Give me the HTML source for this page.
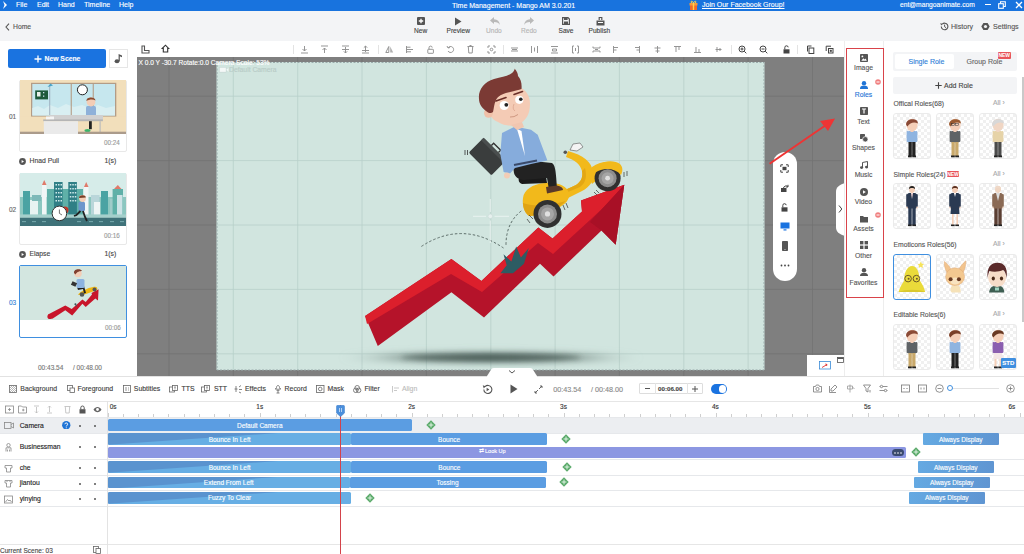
<!DOCTYPE html>
<html><head><meta charset="utf-8">
<style>
*{margin:0;padding:0;box-sizing:border-box}
html,body{width:1024px;height:554px;overflow:hidden;background:#fff;font-family:"Liberation Sans",sans-serif;color:#333}
.a{position:absolute}
.t{position:absolute;white-space:nowrap;line-height:1;-webkit-text-stroke:0.12px currentColor}
#title{left:0;top:0;width:1024px;height:10.5px;background:#1873de;color:#fff}
#tb{left:0;top:10.5px;width:1024px;height:30.5px;background:#f3f4f6}
#left{left:0;top:41px;width:137px;height:335px;background:#fff}
#ctb{left:137px;top:41px;width:708px;height:16px;background:#fff}
#canvas{left:137px;top:57px;width:707px;height:319px;background:#7f7f7f;overflow:hidden}
#strip{left:844px;top:41px;width:40px;height:335px;background:#fff}
#rp{left:884px;top:41px;width:140px;height:335px;background:#fff}
#ttb{left:0;top:376px;width:1024px;height:25px;background:#fff}
#tl{left:0;top:401px;width:1024px;height:153px;background:#fff}
</style></head><body>
<div id="title" class="a">
<svg class="a" style="left:2px;top:1px" width="6" height="8" viewBox="0 0 6 8"><path d="M1 0 L5 4 L1 8 L2.5 4 Z" fill="#fff"/></svg>
<span class="t" style="left:16px;top:0.8px;font-size:7px;color:#fff">File</span>
<span class="t" style="left:37px;top:0.8px;font-size:7px;color:#fff">Edit</span>
<span class="t" style="left:58px;top:0.8px;font-size:7px;color:#fff">Hand</span>
<span class="t" style="left:84px;top:0.8px;font-size:7px;color:#fff">Timeline</span>
<span class="t" style="left:119px;top:0.8px;font-size:7px;color:#fff">Help</span>
<span class="t" style="left:452px;top:1.5px;font-size:7px;color:#fff">Time Management - Mango AM 3.0.201</span>
<svg class="a" style="left:689px;top:0px" width="9" height="10" viewBox="0 0 9 10"><rect x="1" y="4" width="7" height="6" fill="#f06a2a"/><rect x="0.5" y="3" width="8" height="2.5" fill="#f59a3b"/><rect x="3.8" y="3" width="1.4" height="7" fill="#ffd34a"/><path d="M4.5 3 C3 0 1.5 1 2.5 3 M4.5 3 C6 0 7.5 1 6.5 3" stroke="#ffd34a" stroke-width="1" fill="none"/></svg>
<span class="t" style="left:702px;top:1.2px;font-size:7px;color:#fff;text-decoration:underline">Join Our Facebook Group!</span>
<span class="t" style="left:900px;top:1.5px;font-size:6.7px;color:#fff">ent@mangoanimate.com</span>
<div class="a" style="left:985px;top:4px;width:6px;height:1.3px;background:#fff"></div>
<svg class="a" style="left:998px;top:1px" width="8" height="8" viewBox="0 0 8 8"><rect x="0.7" y="2.7" width="4.6" height="4.6" fill="none" stroke="#fff" stroke-width="1.1"/><path d="M2.5 2.5 V0.7 H7.3 V5.5 H5.5" fill="none" stroke="#fff" stroke-width="1.1"/></svg>
<svg class="a" style="left:1015px;top:1px" width="8" height="8" viewBox="0 0 8 8"><path d="M1 1 L7 7 M7 1 L1 7" stroke="#fff" stroke-width="1.3"/></svg>
</div>
<div id="tb" class="a">
<svg class="a" style="left:5px;top:12px" width="5" height="8" viewBox="0 0 5 8"><path d="M4 0.7 L1 4 L4 7.3" stroke="#555" stroke-width="1.1" fill="none"/></svg>
<span class="t" style="left:13px;top:13px;font-size:6.8px;color:#555">Home</span>
<!-- New -->
<svg class="a" style="left:417px;top:6.5px" width="8" height="8" viewBox="0 0 8 8"><rect x="0" y="0" width="8" height="8" rx="1" fill="#555"/><path d="M4 1.8 V6.2 M1.8 4 H6.2" stroke="#fff" stroke-width="1.3"/></svg>
<span class="t" style="left:414px;top:17px;font-size:6.6px;color:#444">New</span>
<svg class="a" style="left:454px;top:6.5px" width="8" height="9" viewBox="0 0 8 9"><path d="M1 0.5 L7.5 4.5 L1 8.5 Z" fill="#555"/></svg>
<span class="t" style="left:446.5px;top:17.5px;font-size:6.6px;color:#444">Preview</span>
<svg class="a" style="left:490px;top:6.5px" width="10" height="8" viewBox="0 0 10 8"><path d="M4 0 L0 3.5 L4 7 V5 C7 5 9 6 10 8 C9.5 4.5 7.5 2.3 4 2.2 Z" fill="#b9b9b9"/></svg>
<span class="t" style="left:486px;top:17px;font-size:6.6px;color:#b5b5b5">Undo</span>
<svg class="a" style="left:524px;top:6.5px" width="10" height="8" viewBox="0 0 10 8"><path d="M6 0 L10 3.5 L6 7 V5 C3 5 1 6 0 8 C0.5 4.5 2.5 2.3 6 2.2 Z" fill="#b9b9b9"/></svg>
<span class="t" style="left:521px;top:17px;font-size:6.6px;color:#b5b5b5">Redo</span>
<svg class="a" style="left:562px;top:6.5px" width="8" height="8" viewBox="0 0 8 8"><path d="M0.6 0.6 H6 L7.4 2 V7.4 H0.6 Z" fill="none" stroke="#555" stroke-width="1.2"/><rect x="2" y="0.6" width="3.6" height="2.4" fill="#555"/><rect x="2" y="4.5" width="4" height="2.9" fill="#555"/></svg>
<span class="t" style="left:558.5px;top:17.5px;font-size:6.6px;color:#444">Save</span>
<svg class="a" style="left:596px;top:6px" width="9" height="9" viewBox="0 0 9 9"><path d="M3.2 3 V0.5 H5.8 V3" stroke="#555" stroke-width="1.2" fill="none"/><path d="M0.5 3.5 H8.5 V8.5 H0.5 Z" fill="#555"/><rect x="2" y="5" width="5" height="1" fill="#fff"/></svg>
<span class="t" style="left:588.5px;top:17px;font-size:6.6px;color:#444">Publish</span>
<!-- history/settings -->
<svg class="a" style="left:940px;top:11.5px" width="9" height="9" viewBox="0 0 9 9"><path d="M1.3 4.5 A3.3 3.3 0 1 0 2.3 2.1" fill="none" stroke="#555" stroke-width="1.1"/><path d="M0.3 1 L2.6 1.9 L1.1 3.6 Z" fill="#555"/><path d="M4.6 2.6 V4.7 L6 5.7" stroke="#555" stroke-width="1" fill="none"/></svg>
<span class="t" style="left:951px;top:13.5px;font-size:7.1px;color:#555">History</span>
<svg class="a" style="left:981px;top:11.5px" width="9" height="9" viewBox="0 0 9 9"><path d="M0.3 4.5 L2.4 0.9 H6.6 L8.7 4.5 L6.6 8.1 H2.4 Z" fill="#555"/><circle cx="4.5" cy="4.5" r="1.6" fill="#f3f4f6"/></svg>
<span class="t" style="left:993px;top:13.5px;font-size:7.1px;color:#555">Settings</span>
</div>
<div id="left" class="a">
<div class="a" style="left:8px;top:8px;width:98px;height:19px;background:#1a73e0;border-radius:2px"></div>
<svg class="a" style="left:34px;top:13.5px" width="8" height="8" viewBox="0 0 8 8"><path d="M4 0.5 V7.5 M0.5 4 H7.5" stroke="#fff" stroke-width="1.3"/></svg>
<span class="t" style="left:44.5px;top:14.5px;font-size:6.8px;color:#fff;font-weight:bold">New Scene</span>
<div class="a" style="left:109px;top:8px;width:19px;height:19px;border:1px solid #e6e6e6;background:#fff"></div>
<svg class="a" style="left:114px;top:12px" width="9" height="11" viewBox="0 0 9 11"><ellipse cx="3" cy="8.3" rx="2.4" ry="2" fill="#555"/><path d="M4.6 8 V1 L8 2.6 V4.2 L5.8 3.2 V8" fill="#555"/></svg>
<!-- card 01 -->
<span class="t" style="left:9px;top:73px;font-size:6.5px;color:#666">01</span>
<div class="a" style="left:19px;top:39px;width:108px;height:72px;border:1px solid #e8e8e8;border-radius:2px;background:#fff"></div>
<svg class="a" style="left:20px;top:39px" width="106" height="54" viewBox="0 0 106 54">
<rect width="106" height="54" fill="#f2dfbb"/>
<rect x="11" y="2.8" width="85.3" height="34" fill="#b39c86"/>
<rect x="12.3" y="4" width="82.7" height="31.5" fill="#c6e7ee"/>
<path d="M12.3 35.5 V28 L18 26 L24 29 L30 25 L38 28 L46 24 L54 27 L62 25 L70 28 L78 25 L86 28 L95 26 V35.5 Z" fill="#d9eff2"/>
<rect x="50.7" y="4" width="1.1" height="31.5" fill="#b39c86"/><rect x="72.7" y="4" width="1.1" height="31.5" fill="#b39c86"/>
<rect x="29.3" y="5" width="0.9" height="30" fill="#9ab"/><path d="M27.5 7 L30.5 3.5 L33 5.5 Z" fill="#4aa3c8"/>
<rect x="15.2" y="10.4" width="12.8" height="9" fill="#1e5a3a"/><rect x="17" y="12" width="3.5" height="4.5" fill="#e8f0e8"/><rect x="23" y="12" width="1.3" height="1.3" fill="#cde"/><rect x="23" y="15.5" width="1.3" height="1.3" fill="#cde"/>
<circle cx="62.4" cy="9.8" r="5" fill="#fff" stroke="#222" stroke-width="1"/>
<rect x="0" y="36.7" width="106" height="17.3" fill="#f2dfbb"/>
<rect x="66" y="26" width="10" height="10" rx="1.5" fill="#8eb1d9"/>
<circle cx="71" cy="22" r="4.4" fill="#f3cdb6"/><path d="M66.5 21 C66 16.5 75.5 16.5 75.5 20.5 C73 19 69 19.5 66.5 21 Z" fill="#8a4a2e"/>
<rect x="30" y="35" width="53" height="5" fill="#d0d0d0"/>
<rect x="23.2" y="39.4" width="59.7" height="1.8" fill="#b5b5b5"/>
<rect x="23.8" y="41.2" width="34.2" height="12.8" fill="#eaeaea"/>
<rect x="79.5" y="41.2" width="1.2" height="12" fill="#bbb"/>
<rect x="69" y="41.2" width="2.8" height="8" fill="#222"/><ellipse cx="67.5" cy="50.5" rx="3" ry="1.5" fill="#3ab56a"/>
<rect x="26" y="36.5" width="8" height="2.8" fill="#f4f4f4"/>
<rect x="0" y="51.7" width="24" height="2.3" fill="#ab9b8b"/><rect x="58" y="51.7" width="48" height="2.3" fill="#ab9b8b"/>
</svg>
<span class="t" style="left:104px;top:99px;font-size:6.3px;color:#999">00:24</span>
<svg class="a" style="left:19px;top:116.8px" width="7" height="7" viewBox="0 0 7 7"><circle cx="3.5" cy="3.5" r="3.4" fill="#555"/><path d="M2.6 1.9 L5 3.5 L2.6 5.1 Z" fill="#fff"/></svg>
<span class="t" style="left:29.5px;top:117.3px;font-size:6.8px;color:#444">Hnad Pull</span>
<span class="t" style="left:104.5px;top:117.3px;font-size:6.8px;color:#444">1(s)</span>
<!-- card 02 -->
<span class="t" style="left:9px;top:166px;font-size:6.5px;color:#666">02</span>
<div class="a" style="left:19px;top:132px;width:108px;height:72px;border:1px solid #e8e8e8;border-radius:2px;background:#fff"></div>
<svg class="a" style="left:20px;top:132px" width="106" height="54" viewBox="0 0 106 54">
<rect width="106" height="54" fill="#d6ece9"/>
<rect x="0" y="24" width="106" height="18" fill="#8cc7c0"/>
<rect x="27" y="16" width="36" height="26" fill="#5fb0a8"/>
<rect x="3" y="18" width="7" height="24" fill="#4aa3a3"/><rect x="10" y="27" width="8" height="15" fill="#e8f3f2"/><rect x="12" y="22" width="9" height="6" fill="#7db9b8"/>
<rect x="22" y="12" width="4.5" height="30" fill="#f0f6f6"/><path d="M22 12 L24.2 7 L26.5 12 Z" fill="#e07a6a"/>
<rect x="34" y="9" width="8.6" height="33" fill="#2f7f86"/><rect x="48.3" y="9" width="8.6" height="33" fill="#2f7f86"/>
<g fill="#cfe9ea"><rect x="35.5" y="11" width="1.5" height="1.5"/><rect x="38" y="11" width="1.5" height="1.5"/><rect x="40.5" y="11" width="1.5" height="1.5"/><rect x="35.5" y="15" width="1.5" height="1.5"/><rect x="38" y="15" width="1.5" height="1.5"/><rect x="40.5" y="15" width="1.5" height="1.5"/><rect x="35.5" y="19" width="1.5" height="1.5"/><rect x="38" y="19" width="1.5" height="1.5"/><rect x="40.5" y="19" width="1.5" height="1.5"/><rect x="35.5" y="23" width="1.5" height="1.5"/><rect x="38" y="23" width="1.5" height="1.5"/><rect x="40.5" y="23" width="1.5" height="1.5"/><rect x="35.5" y="27" width="1.5" height="1.5"/><rect x="38" y="27" width="1.5" height="1.5"/><rect x="40.5" y="27" width="1.5" height="1.5"/>
<rect x="49.8" y="11" width="1.5" height="1.5"/><rect x="52.3" y="11" width="1.5" height="1.5"/><rect x="54.8" y="11" width="1.5" height="1.5"/><rect x="49.8" y="15" width="1.5" height="1.5"/><rect x="52.3" y="15" width="1.5" height="1.5"/><rect x="54.8" y="15" width="1.5" height="1.5"/><rect x="49.8" y="19" width="1.5" height="1.5"/><rect x="52.3" y="19" width="1.5" height="1.5"/><rect x="54.8" y="19" width="1.5" height="1.5"/><rect x="49.8" y="23" width="1.5" height="1.5"/><rect x="52.3" y="23" width="1.5" height="1.5"/><rect x="54.8" y="23" width="1.5" height="1.5"/><rect x="49.8" y="27" width="1.5" height="1.5"/><rect x="52.3" y="27" width="1.5" height="1.5"/><rect x="54.8" y="27" width="1.5" height="1.5"/></g>
<rect x="64" y="14" width="4.5" height="28" fill="#f0f6f6"/><path d="M64 14 L66.2 9 L68.5 14 Z" fill="#e07a6a"/>
<rect x="71" y="22" width="8.6" height="20" fill="#b9d6da"/><rect x="74" y="29" width="6" height="13" fill="#eef5f5"/>
<rect x="81" y="18" width="7" height="24" fill="#4aa3a3"/>
<rect x="90" y="26" width="6" height="16" fill="#9fcbc9"/><rect x="92.6" y="16" width="10.4" height="26" fill="#5fb0a8"/><path d="M94 16 L97.8 12 L101.5 16 Z" fill="#e07a6a"/><rect x="97" y="22" width="5.5" height="20" fill="#cde3e6"/>
<rect x="0" y="41.4" width="106" height="3.3" fill="#a5d0cc"/>
<rect x="0" y="44.7" width="106" height="8.3" fill="#3f7279"/>
<g fill="#9cc" opacity="0.8"><rect x="2" y="48.3" width="4" height="0.8"/><rect x="12" y="48.3" width="4" height="0.8"/><rect x="22" y="48.3" width="4" height="0.8"/><rect x="57" y="48.3" width="4" height="0.8"/><rect x="69" y="48.3" width="4" height="0.8"/><rect x="79" y="48.3" width="4" height="0.8"/><rect x="90" y="48.3" width="4" height="0.8"/><rect x="100" y="48.3" width="4" height="0.8"/></g>
<rect x="0" y="53" width="106" height="1" fill="#fff"/>
<circle cx="45" cy="37" r="3.5" fill="#c0392b"/>
<circle cx="39.4" cy="40.4" r="7.3" fill="#fff" stroke="#333" stroke-width="1"/><path d="M39.4 36.5 V40.4 L42 42" stroke="#333" stroke-width="0.7" fill="none"/>
<rect x="58.5" y="29" width="6.5" height="9" rx="1.2" fill="#6d96cb"/>
<circle cx="62.5" cy="25.5" r="3.4" fill="#f3cdb6"/><path d="M59 25 C58.6 21.5 66 21.5 65.8 24.5 Z" fill="#7a3f28"/>
<path d="M60.5 38 L56.5 42 L54 43 M63 38 L65 44 L67 48" stroke="#222" stroke-width="1.8" fill="none"/>
</svg>
<span class="t" style="left:104px;top:192px;font-size:6.3px;color:#999">00:16</span>
<svg class="a" style="left:19px;top:209.8px" width="7" height="7" viewBox="0 0 7 7"><circle cx="3.5" cy="3.5" r="3.4" fill="#555"/><path d="M2.6 1.9 L5 3.5 L2.6 5.1 Z" fill="#fff"/></svg>
<span class="t" style="left:29.5px;top:210.3px;font-size:6.8px;color:#444">Elapse</span>
<span class="t" style="left:104.5px;top:210.3px;font-size:6.8px;color:#444">1(s)</span>
<!-- card 03 -->
<span class="t" style="left:9px;top:259px;font-size:6.5px;color:#2f7fd6">03</span>
<div class="a" style="left:19px;top:224px;width:108px;height:73px;border:1px solid #3f8fe0;border-radius:2px;background:#fff"></div>
<svg class="a" style="left:20px;top:225px" width="106" height="54" viewBox="0 0 106 54">
<rect width="106" height="54" fill="#d3e6e0"/>
<path d="M28 48.5 L45.3 39.4 L51.7 43.1 L62.4 33.4 L65.7 36.1 L72 28.5 L71.5 27 L78.6 23.2 L78 34.5 L75.3 32.4 L65.7 41 L62.4 37.7 L52.2 49.6 L45.3 44.2 L32.4 52.8 Z" fill="#c8152a"/>
<circle cx="30" cy="50.5" r="2.6" fill="#c8152a"/>
<path d="M54 38 L57 41 L56 37 Z" fill="#3c5c60"/>
<path d="M58 29 C60 25 68 22 73 21 C77 20 78 22 77 24 L66 28 Z" fill="#f0b817"/>
<circle cx="62" cy="28.5" r="2.3" fill="#555"/><circle cx="74.5" cy="23.5" r="2" fill="#555"/>
<path d="M57 21 L64 20 L66 27 L64 27.5 L63 23 L58 24 Z" fill="#222"/>
<rect x="56.5" y="13" width="8" height="9" rx="1.5" fill="#8db3e0"/>
<rect x="51.5" y="16" width="5" height="4" fill="#333" transform="rotate(25 54 18)"/>
<circle cx="58" cy="7.5" r="3.8" fill="#f3cdb6"/><path d="M54 7 C53.5 2.5 61 2.5 62 5 C60 5 57 5.5 55.5 8.5 Z" fill="#80402f"/>
</svg>
<span class="t" style="left:105px;top:284px;font-size:6.3px;color:#999">00:06</span>
<span class="t" style="left:38px;top:324px;font-size:6.5px;color:#777">00:43.54</span>
<span class="t" style="left:73px;top:324px;font-size:6.5px;color:#777">/ 00:48.00</span>
</div>
<div id="ctb" class="a">
<svg class="a" style="left:4px;top:3.5px" width="9" height="9" viewBox="0 0 9 9"><path d="M1 1 H3.5 V5.5 H8 V8 H1 Z" fill="none" stroke="#555" stroke-width="1.1"/></svg>
<svg class="a" style="left:24px;top:3px" width="9" height="9" viewBox="0 0 9 9"><path d="M1.2 4.5 L4.5 1.2 L7.8 4.5 H6.7 V8 H2.3 V4.5 Z" fill="none" stroke="#333" stroke-width="1.1"/></svg>
<div class="a" style="left:156.3px;top:4px;width:1px;height:9px;background:#e3e3e3"></div>
<div class="a" style="left:241.0px;top:4px;width:1px;height:9px;background:#e3e3e3"></div>
<div class="a" style="left:366.0px;top:4px;width:1px;height:9px;background:#e3e3e3"></div>
<div class="a" style="left:594.0px;top:4px;width:1px;height:9px;background:#e3e3e3"></div>
<div class="a" style="left:659.5px;top:4px;width:1px;height:9px;background:#e3e3e3"></div>
<svg class="a" style="left:162.5px;top:3.5px" width="9" height="9" viewBox="0 0 9 9"><path d="M4.5 1 V6 M2.5 4 L4.5 6 L6.5 4 M1 8 H8" stroke="#909090" stroke-width="0.95" fill="none"/></svg>
<svg class="a" style="left:183.2px;top:3.5px" width="9" height="9" viewBox="0 0 9 9"><path d="M1 1 H8 M4.5 8 V3 M2.5 5 L4.5 3 L6.5 5" stroke="#909090" stroke-width="0.95" fill="none"/></svg>
<svg class="a" style="left:204.0px;top:3.5px" width="9" height="9" viewBox="0 0 9 9"><path d="M1 1 H8 M1 4.5 H8 M4.5 2 V8 M2.8 6.3 L4.5 8 L6.2 6.3" stroke="#909090" stroke-width="0.95" fill="none"/></svg>
<svg class="a" style="left:224.0px;top:3.5px" width="9" height="9" viewBox="0 0 9 9"><path d="M1 8 H8 M1 5.5 H8 M4.5 1 V7 M2.8 2.7 L4.5 1 L6.2 2.7" stroke="#909090" stroke-width="0.95" fill="none"/></svg>
<svg class="a" style="left:247.5px;top:3.5px" width="9" height="9" viewBox="0 0 9 9"><path d="M3.8 1.5 L0.8 7.5 H3.8 Z" stroke="#909090" stroke-width="0.95" fill="none"/><path d="M5.2 1.5 L8.2 7.5 H5.2 Z" fill="#b0b0b0"/></svg>
<svg class="a" style="left:268.0px;top:3.5px" width="9" height="9" viewBox="0 0 9 9"><path d="M1.5 1 V8 M1.5 2.2 H5.5 M1.5 4.5 H8 M1.5 6.8 H6" stroke="#909090" stroke-width="0.95" fill="none"/></svg>
<svg class="a" style="left:288.5px;top:3.5px" width="9" height="9" viewBox="0 0 9 9"><rect x="1.8" y="4.3" width="5.6" height="4" rx="0.5" stroke="#909090" stroke-width="0.95" fill="none"/><path d="M3 4.3 V2.8 A1.6 1.6 0 0 1 6.2 2.6" stroke="#909090" stroke-width="0.95" fill="none"/></svg>
<svg class="a" style="left:309.0px;top:3.5px" width="9" height="9" viewBox="0 0 9 9"><path d="M2 3 A3 3 0 1 1 2 6 M1 1 L2 3 L4 2.5" stroke="#909090" stroke-width="0.95" fill="none"/></svg>
<svg class="a" style="left:329.0px;top:3.5px" width="9" height="9" viewBox="0 0 9 9"><path d="M1.5 1.5 H7.5 M2.3 1.5 L2.8 8 H6.2 L6.7 1.5 M3.5 0.5 H5.5" stroke="#909090" stroke-width="0.95" fill="none"/></svg>
<svg class="a" style="left:349.5px;top:3.5px" width="9" height="9" viewBox="0 0 9 9"><path d="M1 3 V1 H3 M6 1 H8 V3 M8 6 V8 H6 M3 8 H1 V6" stroke="#909090" stroke-width="0.95" fill="none"/><circle cx="4.5" cy="4.5" r="1.3" stroke="#909090" stroke-width="0.95" fill="none"/></svg>
<svg class="a" style="left:372.5px;top:3.5px" width="9" height="9" viewBox="0 0 9 9"><path d="M1 3 H8 M2 4.5 H7 M1 6 H8" stroke="#909090" stroke-width="0.95" fill="none"/></svg>
<svg class="a" style="left:392.5px;top:3.5px" width="9" height="9" viewBox="0 0 9 9"><path d="M1.5 1 V8 M7.5 1 V8 M4.5 2.5 V6.5" stroke="#909090" stroke-width="0.95" fill="none"/></svg>
<svg class="a" style="left:412.9px;top:3.5px" width="9" height="9" viewBox="0 0 9 9"><path d="M1 1.5 H8 M2.5 4 H6.5 V6 H2.5 Z M1 8 H8" stroke="#909090" stroke-width="0.95" fill="none"/></svg>
<svg class="a" style="left:434.0px;top:3.5px" width="9" height="9" viewBox="0 0 9 9"><path d="M3 1 H1.5 V8 H3 M6 1 H7.5 V8 H6 M4.5 3 V6" stroke="#909090" stroke-width="0.95" fill="none"/></svg>
<svg class="a" style="left:454.5px;top:3.5px" width="9" height="9" viewBox="0 0 9 9"><path d="M1 1.5 V3 H8 V1.5 M1 7.5 V6 H8 V7.5 M3 4.5 H6" stroke="#909090" stroke-width="0.95" fill="none"/></svg>
<svg class="a" style="left:475.0px;top:3.5px" width="9" height="9" viewBox="0 0 9 9"><path d="M1.5 1 V8 M1.5 2.5 H6 M1.5 5 H4.5" stroke="#909090" stroke-width="0.95" fill="none"/></svg>
<svg class="a" style="left:495.0px;top:3.5px" width="9" height="9" viewBox="0 0 9 9"><path d="M7.5 1 V8 M3 2.5 H7.5 M4.5 5 H7.5" stroke="#909090" stroke-width="0.95" fill="none"/></svg>
<svg class="a" style="left:515.5px;top:3.5px" width="9" height="9" viewBox="0 0 9 9"><path d="M4.5 1 V8 M1.5 3 H7.5 M2.5 6 H6.5" stroke="#909090" stroke-width="0.95" fill="none"/></svg>
<svg class="a" style="left:536.0px;top:3.5px" width="9" height="9" viewBox="0 0 9 9"><path d="M1 1.5 H8 M3 1.5 V7 M6 1.5 V5" stroke="#909090" stroke-width="0.95" fill="none"/></svg>
<svg class="a" style="left:556.2px;top:3.5px" width="9" height="9" viewBox="0 0 9 9"><path d="M1 7.5 H8 M3 2 V7.5 M6 4 V7.5" stroke="#909090" stroke-width="0.95" fill="none"/></svg>
<svg class="a" style="left:577.0px;top:3.5px" width="9" height="9" viewBox="0 0 9 9"><path d="M1.5 4.5 H7.5 M3 2 V7 M6 3 V6" stroke="#909090" stroke-width="0.95" fill="none"/></svg>
<svg class="a" style="left:600.5px;top:3.5px" width="9" height="9" viewBox="0 0 9 9"><circle cx="4" cy="4" r="3" stroke="#444" stroke-width="1" fill="none"/><path d="M6.2 6.2 L8.3 8.3 M2.5 4 H5.5 M4 2.5 V5.5" stroke="#444" stroke-width="1" fill="none"/></svg>
<svg class="a" style="left:621.5px;top:3.5px" width="9" height="9" viewBox="0 0 9 9"><circle cx="4" cy="4" r="3" stroke="#444" stroke-width="1" fill="none"/><path d="M6.2 6.2 L8.3 8.3 M2.5 4 H5.5" stroke="#444" stroke-width="1" fill="none"/></svg>
<svg class="a" style="left:644.5px;top:3.5px" width="9" height="9" viewBox="0 0 9 9"><rect x="1.5" y="4.3" width="6" height="4.2" fill="#444"/><path d="M2.8 4.3 V2.7 A1.7 1.7 0 0 1 6.2 2.3" stroke="#444" stroke-width="1" fill="none"/></svg>
<svg class="a" style="left:668.5px;top:3.5px" width="9" height="9" viewBox="0 0 9 9"><rect x="3" y="3" width="4.8" height="5.5" stroke="#444" stroke-width="1" fill="none"/><path d="M1.5 6.5 V1 H5.5" stroke="#444" stroke-width="1" fill="none"/></svg>
<svg class="a" style="left:687.5px;top:3.5px" width="9" height="9" viewBox="0 0 9 9"><rect x="3.5" y="3.5" width="4.5" height="4.5" stroke="#444" stroke-width="1" fill="none"/><path d="M1.2 6 V1.2 H6" stroke="#444" stroke-width="1" fill="none"/><rect x="4.8" y="4.8" width="2" height="2" fill="#444"/></svg>
</div>
<div id="canvas" class="a">
<svg class="a" style="left:0;top:0" width="708" height="319" viewBox="137 57 708 319">
<defs>
<filter id="blur3" x="-50%" y="-200%" width="200%" height="500%"><feGaussianBlur stdDeviation="2.5"/></filter><filter id="blur6" x="-50%" y="-200%" width="200%" height="500%"><feGaussianBlur stdDeviation="3.5"/></filter>
<radialGradient id="shg" cx="0.5" cy="0.5" r="0.5"><stop offset="0" stop-color="#3d4f4a" stop-opacity="1"/><stop offset="0.6" stop-color="#5d716c" stop-opacity="0.7"/><stop offset="1" stop-color="#9fb5af" stop-opacity="0"/></radialGradient>
<clipPath id="stclip"><rect x="216.5" y="62" width="548" height="308"/></clipPath>
</defs>
<g stroke="#727272" stroke-width="0.8"><line x1="169.0" y1="57" x2="169.0" y2="376"/><line x1="233.3" y1="57" x2="233.3" y2="376"/><line x1="297.7" y1="57" x2="297.7" y2="376"/><line x1="362.0" y1="57" x2="362.0" y2="376"/><line x1="426.4" y1="57" x2="426.4" y2="376"/><line x1="490.8" y1="57" x2="490.8" y2="376"/><line x1="555.1" y1="57" x2="555.1" y2="376"/><line x1="619.4" y1="57" x2="619.4" y2="376"/><line x1="683.8" y1="57" x2="683.8" y2="376"/><line x1="748.1" y1="57" x2="748.1" y2="376"/><line x1="812.5" y1="57" x2="812.5" y2="376"/><line x1="137" y1="96.2" x2="845" y2="96.2"/><line x1="137" y1="160.6" x2="845" y2="160.6"/><line x1="137" y1="225.0" x2="845" y2="225.0"/><line x1="137" y1="289.4" x2="845" y2="289.4"/><line x1="137" y1="353.8" x2="845" y2="353.8"/></g>
<rect x="216.5" y="62" width="548" height="308" fill="#d1e5df"/>
<g stroke="#b7cfc9" stroke-width="0.8" clip-path="url(#stclip)"><line x1="169.0" y1="57" x2="169.0" y2="376"/><line x1="233.3" y1="57" x2="233.3" y2="376"/><line x1="297.7" y1="57" x2="297.7" y2="376"/><line x1="362.0" y1="57" x2="362.0" y2="376"/><line x1="426.4" y1="57" x2="426.4" y2="376"/><line x1="490.8" y1="57" x2="490.8" y2="376"/><line x1="555.1" y1="57" x2="555.1" y2="376"/><line x1="619.4" y1="57" x2="619.4" y2="376"/><line x1="683.8" y1="57" x2="683.8" y2="376"/><line x1="748.1" y1="57" x2="748.1" y2="376"/><line x1="812.5" y1="57" x2="812.5" y2="376"/><line x1="137" y1="96.2" x2="845" y2="96.2"/><line x1="137" y1="160.6" x2="845" y2="160.6"/><line x1="137" y1="225.0" x2="845" y2="225.0"/><line x1="137" y1="289.4" x2="845" y2="289.4"/><line x1="137" y1="353.8" x2="845" y2="353.8"/></g>
<rect x="217" y="62.5" width="547" height="307.5" fill="none" stroke="#9aa" stroke-width="1" stroke-dasharray="2 1.5"/>
<g clip-path="url(#stclip)">
<g clip-path="url(#stclip)">
<!-- dashed arcs & crosshair -->
<path d="M421.4 246.4 Q462 220 503.5 248" fill="none" stroke="#4f5f5b" stroke-width="0.9" stroke-dasharray="2.5 2"/>
<path d="M506 244.8 Q506 222 522.5 210" fill="none" stroke="#4f5f5b" stroke-width="0.9" stroke-dasharray="2.5 2"/>
<g stroke="#eef6f4" stroke-width="0.9" opacity="0.9"><line x1="473" y1="216.3" x2="486" y2="216.3"/><line x1="494.5" y1="216.3" x2="509" y2="216.3"/><line x1="490.3" y1="199" x2="490.3" y2="212"/><line x1="490.3" y1="220.5" x2="490.3" y2="243"/></g>
<circle cx="490.3" cy="216.3" r="2.3" fill="#e6f0ee" stroke="#c9dad6" stroke-width="0.6"/>
<!-- arrow -->
<path d="M365.1 315.9 L451.4 259 L481.4 281.1 L538.3 227.4 L552.5 238.5 L582 211.6 L581 200.5 L624.3 184.7 L615.7 244.8 L601.5 230.6 L553.5 276.4 L540 263.8 L484 317.5 L451.4 292.2 L377.8 345.9 Z" fill="#b5132a"/>
<path d="M365.1 315.9 L451.4 259 L481.4 281.1 L538.3 227.4 L552.5 238.5 L582 211.6 L581 200.5 L624.3 184.7 L604 207 L590 220 L553 254 L538 243 L482 292 L451 274 L367 324 Z" fill="#dc1f2c"/>
<path d="M624.3 184.7 L615.7 244.8 L601.5 230.6 L590 222 Z" fill="#a81026"/>
<!-- splash -->
<path d="M503.5 254.3 L511.4 261.5 L516.2 246.4 L520.9 257.4 L528.8 248 L524 263.8 L513 273.2 L500.4 273.2 L506.7 265.3 Z" fill="#2d5c63"/>
<!-- briefcase -->
<g transform="rotate(45 487.5 156.5)"><rect x="471.5" y="146" width="32" height="21" rx="1.5" fill="#3a3d3d"/><rect x="471.5" y="146" width="32" height="3.5" fill="#4a4e4e"/><path d="M482.5 146 V142.8 H492.5 V146" fill="none" stroke="#333" stroke-width="1.4"/></g>
<path d="M465 150 V155 M467.5 150 V155" stroke="#333" stroke-width="0.8"/>
<!-- scooter -->
<path d="M568 151 C583 155 592 162 593 172 C594 181 590 187 582 191 L562 201 C558 198 559 193 565 190 L576 185 C582 181 583 176 582 171 C580 164 575 160 566 157 Z" fill="#f2b91b"/><path d="M582 171 C583 176 582 181 576 185 L565 190 L568 192 L580 187 C586 183 587 176 585 168 Z" fill="#e3a714"/>
<path d="M592 167 C600 161 614 160 619 165 C621 168 621 171 620 173 L605 176 C600 177 596 181 592 184 C589 178 589 172 592 167 Z" fill="#f2b91b"/>
<path d="M523 198 C524 190 532 184 545 183 C558 182 567 186 569 193 C570 200 565 205 556 209 C546 213 536 216 529 216 C524 212 522 205 523 198 Z" fill="#f2b91b"/>
<path d="M556 209 C546 213 536 216 529 216 C525 213 523 208 523 203 C533 207 548 206 566 201 Z" fill="#e0a414"/>
<path d="M570 150 L573 144 L580 143 L583 147 L577 151 Z" fill="#f4f4f4" stroke="#555" stroke-width="0.6"/>
<circle cx="565.3" cy="152.2" r="1.8" fill="#555"/>
<circle cx="547.5" cy="213.9" r="14" fill="#303030"/><circle cx="547.5" cy="213.9" r="9.5" fill="#8d8d8d"/><circle cx="547.5" cy="213.9" r="6.5" fill="#a5a5a5"/><circle cx="547.5" cy="213.9" r="2.6" fill="#e0e0e0"/>
<circle cx="607.6" cy="178.2" r="13" fill="#303030"/><circle cx="607.6" cy="178.2" r="9" fill="#8d8d8d"/><circle cx="607.6" cy="178.2" r="6" fill="#a5a5a5"/><circle cx="607.6" cy="178.2" r="2.4" fill="#e0e0e0"/>
<path d="M591 173 C596 162 612 158 620 164 C623 167 623 171 621 175 C614 167 600 167 591 176 Z" fill="#f2b91b"/>
<path d="M527 219 L530 223 M529 215 L533 219 M563 205 L565 210 M566 203 L568 208 M624 172 V177 M627 171 V176 M596 190 L599 193 M594 192 L597 195" stroke="#333" stroke-width="0.7"/>
<!-- man -->
<path d="M519 178 L546 176 L547 183 L522 184 C519 183 518 180 519 178 Z" fill="#1a1a1a"/><path d="M513 166 L537.7 161.5 L552 163 C555 165 556 170 557 188 L549 190 L547 178 L524 180 C519 180 515 177 514 173 Z" fill="#222"/>
<path d="M546 187 L557 185.5 C561 186 563 188 563 190 L547 193.5 Z" fill="#5a3a2a"/>
<path d="M502 133 L515 126.6 L531 129.8 L537.7 134.7 L547.4 160.6 L531 164 L515 168 L510 173.6 L503.6 172 L500.3 154 Z" fill="#86acdc"/>
<path d="M514 165 L537 160.5" stroke="#3a4a6a" stroke-width="2.2"/>
<path d="M517 129 L525 156 L521.5 131 Z" fill="#fff"/>
<circle cx="507" cy="175.5" r="3" fill="#f3cdb6"/>
<path d="M487 104 C488 93 498 86 512 86 C524 86 530 94 530 104 C530 114 526 121 518 124.5 C512 126.5 504 126 498 122 C492 120 488 114 487 104 Z" fill="#f4cbb5"/>
<ellipse cx="488.5" cy="113" rx="4.5" ry="4.8" fill="#f0c0a8"/>
<path d="M479 99 C478 90 484 82 494 79 C502 77 508 76 512 73 C514 71 515 69 514.5 68.5 C517 71 518 74 518 76 C521 79 522 84 521.5 89 C519 90 514 91 508 92.5 C502 94 498 96 496 100 C494 104 494 108 493 112 C491 114 488 113 486 111 C482 108 479 104 479 99 Z" fill="#7b3a34"/>
<path d="M496 101 L506 97.5" stroke="#6a2e28" stroke-width="1.6" stroke-linecap="round"/>
<path d="M514 94.5 L522.5 91.5" stroke="#6a2e28" stroke-width="1.6" stroke-linecap="round"/>
<circle cx="504.2" cy="105.5" r="4.6" fill="#fff"/><circle cx="519.3" cy="99.8" r="4.1" fill="#fff"/>
<circle cx="506.3" cy="104.8" r="1.9" fill="#222"/><circle cx="520.8" cy="99.2" r="1.8" fill="#222"/>
<path d="M514 104 Q512 109 515 111" stroke="#d9a08a" stroke-width="0.7" fill="none"/>
<path d="M510 117 Q514 117.5 518 114.5" stroke="#c48a74" stroke-width="0.8" fill="none"/>
<path d="M511 125 L517 130 L524 127 L522 122 Z" fill="#f1c6b0"/>
</g>
<ellipse cx="491" cy="357.5" rx="152" ry="6.5" fill="url(#shg)" filter="url(#blur6)"/><ellipse cx="491" cy="357.5" rx="90" ry="3.5" fill="#3d4f4a" opacity="0.6" filter="url(#blur3)"/>
</g>
</svg>
<span class="t" style="left:1.5px;top:2.5px;font-size:6.6px;color:#fff">X 0.0 Y -30.7 Rotate:0.0 Camera Scale: 53%</span>
<svg class="a" style="left:82px;top:9.5px" width="10" height="6" viewBox="0 0 10 6"><rect x="0.3" y="0.3" width="7" height="5" rx="0.6" fill="#f4f8f7" stroke="#b9cbc6" stroke-width="0.5"/><path d="M7.3 2.8 L9.5 1 V4.8 Z" fill="#f4f8f7"/></svg>
<span class="t" style="left:92px;top:10px;font-size:6.8px;color:#b8cbc6">Default Camera</span>
</div>
<!-- canvas overlays -->
<div class="a" style="left:773px;top:152px;width:24px;height:129px;background:#fff;border-radius:12px"></div>
<svg class="a" style="left:780px;top:163.5px" width="9" height="9" viewBox="0 0 9 9"><path d="M0.8 3 V0.8 H3 M6 0.8 H8.2 V3 M8.2 6 V8.2 H6 M3 8.2 H0.8 V6" stroke="#444" stroke-width="1" fill="none"/><rect x="2.5" y="2.8" width="4" height="3.4" fill="#444"/></svg>
<svg class="a" style="left:780px;top:184px" width="9" height="9" viewBox="0 0 9 9"><rect x="1" y="4" width="5.5" height="4" fill="#444"/><path d="M3.5 4 A2.8 2.8 0 0 1 8 2.5 M8 0.8 V3 H5.8" stroke="#444" stroke-width="1" fill="none"/></svg>
<svg class="a" style="left:780px;top:203px" width="9" height="9" viewBox="0 0 9 9"><rect x="1.5" y="4.3" width="6" height="4.3" fill="#444"/><path d="M2.8 4.3 V2.6 A1.7 1.7 0 0 1 6.2 2.2" stroke="#444" stroke-width="1" fill="none"/></svg>
<svg class="a" style="left:779.5px;top:221.5px" width="10" height="9" viewBox="0 0 10 9"><rect x="0.5" y="0.5" width="9" height="6" fill="#1a73e0"/><rect x="3.5" y="7.3" width="3" height="1.2" fill="#1a73e0"/></svg>
<svg class="a" style="left:781.5px;top:240.5px" width="6" height="10" viewBox="0 0 6 10"><rect x="0" y="0" width="6" height="10" rx="0.8" fill="#555"/><rect x="2.3" y="8" width="1.4" height="1" fill="#aaa"/></svg>
<svg class="a" style="left:779.5px;top:263.5px" width="10" height="3" viewBox="0 0 10 3"><circle cx="1.5" cy="1.5" r="0.9" fill="#444"/><circle cx="5" cy="1.5" r="0.9" fill="#444"/><circle cx="8.5" cy="1.5" r="0.9" fill="#444"/></svg>
<svg class="a" style="left:835px;top:183px" width="10" height="53" viewBox="0 0 10 53"><path d="M10 0 C4 2 1 4 1 9 V44 C1 49 4 51 10 53 Z" fill="#fff"/><path d="M4 22.5 L6.8 26 L4 29.5" stroke="#444" stroke-width="1" fill="none"/></svg>
<div class="a" style="left:807px;top:355px;width:38px;height:21px;background:#fff"></div>
<svg class="a" style="left:819px;top:361px" width="12" height="9" viewBox="0 0 12 9"><rect x="0.5" y="0.5" width="11" height="7.5" fill="#fff" stroke="#3a8ad6" stroke-width="0.8"/><path d="M3 6.5 L8 3.5 M6.3 3 L8 3.5 L7.5 5" stroke="#e03030" stroke-width="0.9" fill="none"/></svg>
<svg class="a" style="left:837px;top:357px" width="7" height="6" viewBox="0 0 7 6"><rect x="0.5" y="0.5" width="6" height="5" fill="none" stroke="#555" stroke-width="0.8"/><rect x="0.5" y="0.5" width="6" height="1.5" fill="#555"/></svg>
<svg class="a" style="left:487px;top:368px" width="50" height="8" viewBox="0 0 50 8"><path d="M0 8 L4.5 1 Q5.5 0 7 0 H43 Q44.5 0 45.5 1 L50 8 Z" fill="#fff"/><path d="M22 2.5 L25 5 L28 2.5" stroke="#444" stroke-width="0.9" fill="none"/></svg>
<svg class="a" style="left:765px;top:112px" width="75" height="56" viewBox="765 112 75 56"><path d="M769.6 163.7 L826 125" stroke="#ee3434" stroke-width="2"/><path d="M835 118.6 L820 121 L828 131 Z" fill="#ee3434"/></svg>
<div id="strip" class="a">
<div class="a" style="left:0;top:0;width:1px;height:335px;background:#ededed"></div>
<div class="a" style="left:38.5px;top:0;width:1px;height:335px;background:#ededed"></div><div class="a" style="left:1.6px;top:7.3px;width:38px;height:249.5px;border:1.4px solid #d9434a"></div>
<svg class="a" style="left:15.6px;top:13.0px" width="8" height="8" viewBox="0 0 8 8"><rect x="0" y="0" width="8" height="8" rx="0.8" fill="#555"/><path d="M1.3 6.8 L3.3 4.3 L4.6 5.6 L5.6 4.6 L6.8 6.8 Z" fill="#fff"/><circle cx="2.4" cy="2.4" r="0.9" fill="#fff"/></svg>
<span class="t" style="left:0.5px;width:38px;text-align:center;top:24.1px;font-size:6.8px;color:#555">Image</span>
<svg class="a" style="left:15.6px;top:39.8px" width="8" height="8" viewBox="0 0 8 8"><circle cx="4" cy="2.3" r="2.2" fill="#1f74d6"/><path d="M0 8 C0 5 1.8 4.8 4 4.8 C6.2 4.8 8 5 8 8 Z" fill="#1f74d6"/></svg>
<span class="t" style="left:0.5px;width:38px;text-align:center;top:50.7px;font-size:6.8px;color:#1f74d6">Roles</span>
<svg class="a" style="left:15.6px;top:65.8px" width="8" height="8" viewBox="0 0 8 8"><rect x="0" y="0" width="8" height="8" rx="0.8" fill="#555"/><path d="M2 2 H6 M4 2 V6.5" stroke="#fff" stroke-width="1.2"/></svg>
<span class="t" style="left:0.5px;width:38px;text-align:center;top:77.7px;font-size:6.8px;color:#555">Text</span>
<svg class="a" style="left:15.6px;top:93.0px" width="8" height="8" viewBox="0 0 8 8"><rect x="0" y="0" width="5" height="5" rx="0.6" fill="#555"/><circle cx="5.3" cy="5.3" r="2.7" fill="#555" stroke="#fff" stroke-width="0.7"/></svg>
<span class="t" style="left:0.5px;width:38px;text-align:center;top:104.4px;font-size:6.8px;color:#555">Shapes</span>
<svg class="a" style="left:15.6px;top:119.8px" width="8" height="8" viewBox="0 0 8 8"><path d="M2.5 1.5 L7.5 0.5 V6" stroke="#555" stroke-width="1" fill="none"/><path d="M2.5 1.5 V6.5" stroke="#555" stroke-width="1"/><ellipse cx="1.6" cy="6.6" rx="1.6" ry="1.3" fill="#555"/><ellipse cx="6.6" cy="6.1" rx="1.6" ry="1.3" fill="#555"/></svg>
<span class="t" style="left:0.5px;width:38px;text-align:center;top:131.0px;font-size:6.8px;color:#555">Music</span>
<svg class="a" style="left:15.6px;top:146.5px" width="8" height="8" viewBox="0 0 8 8"><circle cx="4" cy="4" r="4" fill="#555"/><path d="M3 2.3 L5.8 4 L3 5.7 Z" fill="#fff"/></svg>
<span class="t" style="left:0.5px;width:38px;text-align:center;top:158.0px;font-size:6.8px;color:#555">Video</span>
<svg class="a" style="left:15.6px;top:173.5px" width="8" height="8" viewBox="0 0 8 8"><path d="M0 1 H3 L4 2 H8 V7.5 H0 Z" fill="#555"/></svg>
<span class="t" style="left:0.5px;width:38px;text-align:center;top:184.7px;font-size:6.8px;color:#555">Assets</span>
<svg class="a" style="left:15.6px;top:200.0px" width="8" height="8" viewBox="0 0 8 8"><rect x="0" y="0" width="3.4" height="3.4" fill="#555"/><rect x="4.6" y="0" width="3.4" height="3.4" fill="#555"/><rect x="0" y="4.6" width="3.4" height="3.4" fill="#555"/><rect x="4.6" y="4.6" width="3.4" height="3.4" fill="#555"/></svg>
<span class="t" style="left:0.5px;width:38px;text-align:center;top:211.5px;font-size:6.8px;color:#555">Other</span>
<svg class="a" style="left:15.6px;top:227.0px" width="8" height="8" viewBox="0 0 8 8"><circle cx="4" cy="2.2" r="2.2" fill="#555"/><path d="M0 8 C0 5.2 1.8 4.9 4 4.9 C6.2 4.9 8 5.2 8 8 Z" fill="#555"/></svg>
<span class="t" style="left:0.5px;width:38px;text-align:center;top:238.6px;font-size:6.8px;color:#555">Favorites</span>
<svg class="a" style="left:31px;top:37.5px" width="6" height="6" viewBox="0 0 6 6"><circle cx="3" cy="3" r="2.8" fill="#f08080"/><rect x="1.5" y="2.5" width="3" height="1" fill="#fff"/></svg>
<svg class="a" style="left:31px;top:171px" width="6" height="6" viewBox="0 0 6 6"><circle cx="3" cy="3" r="2.8" fill="#f08080"/><rect x="1.5" y="2.5" width="3" height="1" fill="#fff"/></svg>
</div>
<div id="rp" class="a">
<div class="a" style="left:9.0px;top:10.7px;width:124px;height:19.3px;background:#f3f4f6;border-radius:2px"></div>
<div class="a" style="left:11.0px;top:12.5px;width:59px;height:15.5px;background:#fff;border-radius:2px"></div>
<span class="t" style="left:24.5px;top:17.2px;font-size:7px;color:#2f80d8">Single Role</span>
<span class="t" style="left:82.5px;top:17.2px;font-size:7px;color:#666">Group Role</span>
<div class="a" style="left:114.2px;top:11.2px;width:12.5px;height:6.5px;background:#e8545a;border-radius:1px"></div><svg class="a" style="left:114.2px;top:11.2px" width="12.5" height="6.5" viewBox="0 0 12.5 6.5"><text x="6.25" y="5.2" text-anchor="middle" font-family="Liberation Sans" font-size="5" font-weight="bold" fill="#fff">NEW</text></svg>
<div class="a" style="left:9.0px;top:35.5px;width:124px;height:17px;background:#f3f4f6;border-radius:2px"></div>
<svg class="a" style="left:50.5px;top:40.5px" width="7" height="7" viewBox="0 0 7 7"><path d="M3.5 0.3 V6.7 M0.3 3.5 H6.7" stroke="#444" stroke-width="1.1"/></svg>
<span class="t" style="left:60px;top:40.8px;font-size:7px;color:#444">Add Role</span>
<div class="a" style="left:137.7px;top:35.5px;width:2.3px;height:245.5px;background:#c9c9c9"></div>
<span class="t" style="left:9.5px;top:60.1px;font-size:6.8px;color:#555">Offical Roles(68)</span>
<span class="t" style="left:109.0px;top:59.0px;font-size:6.8px;color:#aaa">All &#8250;</span>
<span class="t" style="left:9.5px;top:131.1px;font-size:6.8px;color:#555">Simple Roles(24)</span>
<span class="t" style="left:109.0px;top:130.0px;font-size:6.8px;color:#aaa">All &#8250;</span>
<span class="t" style="left:9.5px;top:200.9px;font-size:6.8px;color:#555">Emoticons Roles(56)</span>
<span class="t" style="left:109.0px;top:199.8px;font-size:6.8px;color:#aaa">All &#8250;</span>
<span class="t" style="left:9.5px;top:270.9px;font-size:6.8px;color:#555">Editable Roles(6)</span>
<span class="t" style="left:109.0px;top:269.8px;font-size:6.8px;color:#aaa">All &#8250;</span>
<div class="a" style="left:62.5px;top:129.8px;width:12px;height:6.5px;background:#e8545a;border-radius:1px"></div><svg class="a" style="left:62.5px;top:129.8px" width="12" height="6.5" viewBox="0 0 12 6.5"><text x="6" y="5.2" text-anchor="middle" font-family="Liberation Sans" font-size="5" font-weight="bold" fill="#fff">NEW</text></svg>
<div class="a" style="left:9.3px;top:72.0px;width:37.5px;height:45.5px;border:1px solid #ebebeb;border-radius:3px;background-color:#fff;background-image:linear-gradient(45deg,#f0f0f0 25%,transparent 25%,transparent 75%,#f0f0f0 75%),linear-gradient(45deg,#f0f0f0 25%,transparent 25%,transparent 75%,#f0f0f0 75%);background-size:6px 6px;background-position:0 0,3px 3px"></div>
<svg class="a" style="left:9.3px;top:74.0px" width="38" height="44" viewBox="0 0 38 44"><rect x="14.3" y="16" width="9.4" height="11.5" rx="1.8" fill="#8fb4e0"/><rect x="13.6" y="16" width="1.8" height="11" rx="0.9" fill="#8fb4e0"/><rect x="22.6" y="16" width="1.8" height="11" rx="0.9" fill="#8fb4e0"/><rect x="15.5" y="27" width="3.3" height="14" fill="#222"/><rect x="19.2" y="27" width="3.3" height="14" fill="#222"/><rect x="15" y="40.5" width="3.8" height="1.8" fill="#222"/><rect x="19.2" y="40.5" width="3.8" height="1.8" fill="#222"/><rect x="17.5" y="14.5" width="3" height="2.5" fill="#f5cfb8"/><ellipse cx="19" cy="10" rx="5.6" ry="6.2" fill="#f5cfb8"/><path d="M13.2 10 C12 2.5 26 2.5 24.8 8.5 C22 6.5 17 7 14.5 11.5 Z" fill="#8a4a36"/></svg>
<div class="a" style="left:52.3px;top:72.0px;width:37.5px;height:45.5px;border:1px solid #ebebeb;border-radius:3px;background-color:#fff;background-image:linear-gradient(45deg,#f0f0f0 25%,transparent 25%,transparent 75%,#f0f0f0 75%),linear-gradient(45deg,#f0f0f0 25%,transparent 25%,transparent 75%,#f0f0f0 75%);background-size:6px 6px;background-position:0 0,3px 3px"></div>
<svg class="a" style="left:52.3px;top:74.0px" width="38" height="44" viewBox="0 0 38 44"><rect x="14.3" y="16" width="9.4" height="11.5" rx="1.8" fill="#5f6366"/><rect x="13.6" y="16" width="1.8" height="11" rx="0.9" fill="#5f6366"/><rect x="22.6" y="16" width="1.8" height="11" rx="0.9" fill="#5f6366"/><rect x="15.5" y="27" width="3.3" height="14" fill="#c9a96b"/><rect x="19.2" y="27" width="3.3" height="14" fill="#c9a96b"/><rect x="15" y="40.5" width="3.8" height="1.8" fill="#222"/><rect x="19.2" y="40.5" width="3.8" height="1.8" fill="#222"/><rect x="17.5" y="14.5" width="3" height="2.5" fill="#f5cfb8"/><ellipse cx="19" cy="10" rx="5.6" ry="6.2" fill="#f5cfb8"/><path d="M13.2 10 C12 2.5 26 2.5 24.8 8.5 C22 6.5 17 7 14.5 11.5 Z" fill="#9a5a30"/><rect x="15.3" y="8.5" width="3" height="2" fill="none" stroke="#333" stroke-width="0.5"/><rect x="19.7" y="8.5" width="3" height="2" fill="none" stroke="#333" stroke-width="0.5"/></svg>
<div class="a" style="left:95.2px;top:72.0px;width:37.5px;height:45.5px;border:1px solid #ebebeb;border-radius:3px;background-color:#fff;background-image:linear-gradient(45deg,#f0f0f0 25%,transparent 25%,transparent 75%,#f0f0f0 75%),linear-gradient(45deg,#f0f0f0 25%,transparent 25%,transparent 75%,#f0f0f0 75%);background-size:6px 6px;background-position:0 0,3px 3px"></div>
<svg class="a" style="left:95.2px;top:74.0px" width="38" height="44" viewBox="0 0 38 44"><rect x="14.3" y="16" width="9.4" height="11.5" rx="1.8" fill="#e6d3a8"/><rect x="13.6" y="16" width="1.8" height="11" rx="0.9" fill="#e6d3a8"/><rect x="22.6" y="16" width="1.8" height="11" rx="0.9" fill="#e6d3a8"/><rect x="15.5" y="27" width="3.3" height="14" fill="#4a4a4a"/><rect x="19.2" y="27" width="3.3" height="14" fill="#4a4a4a"/><rect x="15" y="40.5" width="3.8" height="1.8" fill="#222"/><rect x="19.2" y="40.5" width="3.8" height="1.8" fill="#222"/><rect x="17.5" y="14.5" width="3" height="2.5" fill="#f0d6c4"/><ellipse cx="19" cy="10" rx="5.6" ry="6.2" fill="#f0d6c4"/><path d="M13.2 10 C12 2.5 26 2.5 24.8 8.5 C22 6.5 17 7 14.5 11.5 Z" fill="#d8d8d8"/></svg>
<div class="a" style="left:9.3px;top:142.4px;width:37.5px;height:45.5px;border:1px solid #ebebeb;border-radius:3px;background-color:#fff;background-image:linear-gradient(45deg,#f0f0f0 25%,transparent 25%,transparent 75%,#f0f0f0 75%),linear-gradient(45deg,#f0f0f0 25%,transparent 25%,transparent 75%,#f0f0f0 75%);background-size:6px 6px;background-position:0 0,3px 3px"></div>
<svg class="a" style="left:9.3px;top:144.4px" width="38" height="44" viewBox="0 0 38 44"><rect x="13.2" y="9" width="2" height="13" rx="1" fill="#2b3a52"/><rect x="22.8" y="9" width="2" height="13" rx="1" fill="#2b3a52"/><circle cx="14.2" cy="22.5" r="1" fill="#f5cfb8"/><circle cx="23.8" cy="22.5" r="1" fill="#f5cfb8"/><rect x="15.3" y="23" width="3.4" height="17" fill="#2b3a52"/><rect x="19.3" y="23" width="3.4" height="17" fill="#2b3a52"/><rect x="14.5" y="8" width="9" height="15.5" rx="1.5" fill="#2b3a52"/><rect x="15" y="39.5" width="3.7" height="1.6" fill="#222"/><rect x="19.3" y="39.5" width="3.7" height="1.6" fill="#222"/><rect x="18" y="6.5" width="2" height="2" fill="#f5cfb8"/><ellipse cx="19" cy="4.2" rx="3" ry="3.5" fill="#f5cfb8"/><path d="M16 4 C15.5 0 22.5 0 22 4 C21 2.5 17 2.5 16 4 Z" fill="#222"/><path d="M18 8 L19 14 L20 8 Z" fill="#fff"/><path d="M18.7 8.5 L19 13 L19.3 8.5 Z" fill="#a33"/></svg>
<div class="a" style="left:52.3px;top:142.4px;width:37.5px;height:45.5px;border:1px solid #ebebeb;border-radius:3px;background-color:#fff;background-image:linear-gradient(45deg,#f0f0f0 25%,transparent 25%,transparent 75%,#f0f0f0 75%),linear-gradient(45deg,#f0f0f0 25%,transparent 25%,transparent 75%,#f0f0f0 75%);background-size:6px 6px;background-position:0 0,3px 3px"></div>
<svg class="a" style="left:52.3px;top:144.4px" width="38" height="44" viewBox="0 0 38 44"><rect x="13.2" y="9" width="2" height="13" rx="1" fill="#2b3a52"/><rect x="22.8" y="9" width="2" height="13" rx="1" fill="#2b3a52"/><circle cx="14.2" cy="22.5" r="1" fill="#f5cfb8"/><circle cx="23.8" cy="22.5" r="1" fill="#f5cfb8"/><path d="M15 22 H23 L23.5 29 H14.5 Z" fill="#2b3a52"/><rect x="16" y="29" width="1.6" height="11" fill="#f5cfb8"/><rect x="20.4" y="29" width="1.6" height="11" fill="#f5cfb8"/><rect x="14.5" y="8" width="9" height="15.5" rx="1.5" fill="#2b3a52"/><rect x="15" y="39.5" width="3.7" height="1.6" fill="#222"/><rect x="19.3" y="39.5" width="3.7" height="1.6" fill="#222"/><rect x="18" y="6.5" width="2" height="2" fill="#f5cfb8"/><ellipse cx="19" cy="4.2" rx="3" ry="3.5" fill="#f5cfb8"/><path d="M16 4 C15.5 0 22.5 0 22 4 C21 2.5 17 2.5 16 4 Z" fill="#5a3020"/><path d="M18 8 L19 12 L20 8 Z" fill="#fff"/></svg>
<div class="a" style="left:95.2px;top:142.4px;width:37.5px;height:45.5px;border:1px solid #ebebeb;border-radius:3px;background-color:#fff;background-image:linear-gradient(45deg,#f0f0f0 25%,transparent 25%,transparent 75%,#f0f0f0 75%),linear-gradient(45deg,#f0f0f0 25%,transparent 25%,transparent 75%,#f0f0f0 75%);background-size:6px 6px;background-position:0 0,3px 3px"></div>
<svg class="a" style="left:95.2px;top:144.4px" width="38" height="44" viewBox="0 0 38 44"><rect x="13.2" y="9" width="2" height="13" rx="1" fill="#8a6a55"/><rect x="22.8" y="9" width="2" height="13" rx="1" fill="#8a6a55"/><circle cx="14.2" cy="22.5" r="1" fill="#efd5c2"/><circle cx="23.8" cy="22.5" r="1" fill="#efd5c2"/><rect x="15.3" y="23" width="3.4" height="17" fill="#5a3e32"/><rect x="19.3" y="23" width="3.4" height="17" fill="#5a3e32"/><rect x="14.5" y="8" width="9" height="15.5" rx="1.5" fill="#8a6a55"/><rect x="15" y="39.5" width="3.7" height="1.6" fill="#222"/><rect x="19.3" y="39.5" width="3.7" height="1.6" fill="#222"/><rect x="18" y="6.5" width="2" height="2" fill="#efd5c2"/><ellipse cx="19" cy="4.2" rx="3" ry="3.5" fill="#efd5c2"/><path d="M16 4 C15.5 0 22.5 0 22 4 C21 2.5 17 2.5 16 4 Z" fill="#efd9c8"/><path d="M17 8 L19 16 L21 8 Z" fill="#ddd"/></svg>
<div class="a" style="left:9.3px;top:213.0px;width:37.5px;height:45.5px;border:1.2px solid #3f8fe0;border-radius:3px;background-color:#fff;background-image:linear-gradient(45deg,#f0f0f0 25%,transparent 25%,transparent 75%,#f0f0f0 75%),linear-gradient(45deg,#f0f0f0 25%,transparent 25%,transparent 75%,#f0f0f0 75%);background-size:6px 6px;background-position:0 0,3px 3px"></div>
<svg class="a" style="left:9.3px;top:215.0px" width="38" height="44" viewBox="0 0 38 44"><path d="M5.6 35.9 C7 31 9 28 11 25 C11 17 14 10 19 9.9 C24 10 26.5 16 26.5 24 C29 28 31 31 32.2 35.9 Z" fill="#eadb3a"/><path d="M5.6 35.9 C12 33 26 33 32.2 35.9 Z" fill="#d9c82e"/><circle cx="15.1" cy="22.6" r="3.3" fill="none" stroke="#6b5a2a" stroke-width="1"/><circle cx="23.4" cy="22.6" r="3.3" fill="none" stroke="#6b5a2a" stroke-width="1"/><circle cx="15.6" cy="22.8" r="1" fill="#6b5a2a"/><circle cx="23.9" cy="22.8" r="1" fill="#6b5a2a"/><path d="M27.8 5.6 L28.8 7.8 L31.2 8 L29.4 9.6 L30 12 L27.8 10.8 L25.6 12 L26.2 9.6 L24.4 8 L26.8 7.8 Z" fill="#f6e35a"/></svg>
<div class="a" style="left:52.3px;top:213.0px;width:37.5px;height:45.5px;border:1px solid #ebebeb;border-radius:3px;background-color:#fff;background-image:linear-gradient(45deg,#f0f0f0 25%,transparent 25%,transparent 75%,#f0f0f0 75%),linear-gradient(45deg,#f0f0f0 25%,transparent 25%,transparent 75%,#f0f0f0 75%);background-size:6px 6px;background-position:0 0,3px 3px"></div>
<svg class="a" style="left:52.3px;top:215.0px" width="38" height="44" viewBox="0 0 38 44"><path d="M8.3 5.4 C12 8 15 12 15.5 15 L11 17 C9 13 8 9 8.3 5.4 Z M29.9 4.8 C26 8 23 12 22.5 15 L27 17 C29 13 30 9 29.9 4.8 Z" fill="#f2c48e" stroke="#d9a06a" stroke-width="0.4"/><path d="M16 29.5 C14 32 14 35 15.6 36.5 H24.5 C25 34 24.5 31 22.5 29.5 Z" fill="#f6e2b8"/><ellipse cx="19.1" cy="20.7" rx="9.5" ry="8.9" fill="#f3c890" stroke="#d9a06a" stroke-width="0.4"/><ellipse cx="19.1" cy="25" rx="5" ry="3.5" fill="#f8e3c0"/><circle cx="14.6" cy="23.2" r="2" fill="#6a3a22"/><circle cx="22.9" cy="23.2" r="2" fill="#6a3a22"/></svg>
<div class="a" style="left:95.2px;top:213.0px;width:37.5px;height:45.5px;border:1px solid #ebebeb;border-radius:3px;background-color:#fff;background-image:linear-gradient(45deg,#f0f0f0 25%,transparent 25%,transparent 75%,#f0f0f0 75%),linear-gradient(45deg,#f0f0f0 25%,transparent 25%,transparent 75%,#f0f0f0 75%);background-size:6px 6px;background-position:0 0,3px 3px"></div>
<svg class="a" style="left:95.2px;top:215.0px" width="38" height="44" viewBox="0 0 38 44"><path d="M10.1 36.5 C10.5 32 13 29.6 18 29.6 C23 29.6 25 32 25.3 36.5 Z" fill="#3e5e52"/><rect x="16" y="31.5" width="4" height="3" fill="#9fd3c0"/><ellipse cx="18.1" cy="21.5" rx="9" ry="9.5" fill="#f6dcc8"/><path d="M8.6 22 C7.5 11 12 6.7 18.5 6.7 C25 6.7 29 11 27.6 22 C27 18 26 15 24 14 C20 16 14 16 10.5 15 C9.5 17 9 19 8.6 22 Z" fill="#5a2a2a"/><ellipse cx="14.3" cy="22.6" rx="1.6" ry="2" fill="#4a2a1a"/><ellipse cx="22.5" cy="22.6" rx="1.6" ry="2" fill="#4a2a1a"/></svg>
<div class="a" style="left:9.3px;top:283.0px;width:37.5px;height:45.5px;border:1px solid #ebebeb;border-radius:3px;background-color:#fff;background-image:linear-gradient(45deg,#f0f0f0 25%,transparent 25%,transparent 75%,#f0f0f0 75%),linear-gradient(45deg,#f0f0f0 25%,transparent 25%,transparent 75%,#f0f0f0 75%);background-size:6px 6px;background-position:0 0,3px 3px"></div>
<svg class="a" style="left:9.3px;top:285.0px" width="38" height="44" viewBox="0 0 38 44"><rect x="14.3" y="16" width="9.4" height="11.5" rx="1.8" fill="#5f6366"/><rect x="13.6" y="16" width="1.8" height="11" rx="0.9" fill="#5f6366"/><rect x="22.6" y="16" width="1.8" height="11" rx="0.9" fill="#5f6366"/><rect x="15.5" y="27" width="3.3" height="14" fill="#c9a96b"/><rect x="19.2" y="27" width="3.3" height="14" fill="#c9a96b"/><rect x="15" y="40.5" width="3.8" height="1.8" fill="#222"/><rect x="19.2" y="40.5" width="3.8" height="1.8" fill="#222"/><rect x="17.5" y="14.5" width="3" height="2.5" fill="#f5cfb8"/><ellipse cx="19" cy="10" rx="5.6" ry="6.2" fill="#f5cfb8"/><path d="M13.2 10 C12 2.5 26 2.5 24.8 8.5 C22 6.5 17 7 14.5 11.5 Z" fill="#8a4a36"/></svg>
<div class="a" style="left:52.3px;top:283.0px;width:37.5px;height:45.5px;border:1px solid #ebebeb;border-radius:3px;background-color:#fff;background-image:linear-gradient(45deg,#f0f0f0 25%,transparent 25%,transparent 75%,#f0f0f0 75%),linear-gradient(45deg,#f0f0f0 25%,transparent 25%,transparent 75%,#f0f0f0 75%);background-size:6px 6px;background-position:0 0,3px 3px"></div>
<svg class="a" style="left:52.3px;top:285.0px" width="38" height="44" viewBox="0 0 38 44"><rect x="14.3" y="16" width="9.4" height="11.5" rx="1.8" fill="#8fb4e0"/><rect x="13.6" y="16" width="1.8" height="11" rx="0.9" fill="#8fb4e0"/><rect x="22.6" y="16" width="1.8" height="11" rx="0.9" fill="#8fb4e0"/><rect x="15.5" y="27" width="3.3" height="14" fill="#222"/><rect x="19.2" y="27" width="3.3" height="14" fill="#222"/><rect x="15" y="40.5" width="3.8" height="1.8" fill="#222"/><rect x="19.2" y="40.5" width="3.8" height="1.8" fill="#222"/><rect x="17.5" y="14.5" width="3" height="2.5" fill="#f5cfb8"/><ellipse cx="19" cy="10" rx="5.6" ry="6.2" fill="#f5cfb8"/><path d="M13.2 10 C12 2.5 26 2.5 24.8 8.5 C22 6.5 17 7 14.5 11.5 Z" fill="#7a3f28"/></svg>
<div class="a" style="left:95.2px;top:283.0px;width:37.5px;height:45.5px;border:1px solid #ebebeb;border-radius:3px;background-color:#fff;background-image:linear-gradient(45deg,#f0f0f0 25%,transparent 25%,transparent 75%,#f0f0f0 75%),linear-gradient(45deg,#f0f0f0 25%,transparent 25%,transparent 75%,#f0f0f0 75%);background-size:6px 6px;background-position:0 0,3px 3px"></div>
<svg class="a" style="left:95.2px;top:285.0px" width="38" height="44" viewBox="0 0 38 44"><rect x="14.3" y="16" width="9.4" height="11.5" rx="1.8" fill="#8b5fb0"/><rect x="13.6" y="16" width="1.8" height="11" rx="0.9" fill="#8b5fb0"/><rect x="22.6" y="16" width="1.8" height="11" rx="0.9" fill="#8b5fb0"/><path d="M15 27 H23 L24 33 H14 Z" fill="#f3e6e6"/><rect x="15.5" y="33" width="2" height="8" fill="#f5cfb8"/><rect x="20.5" y="33" width="2" height="8" fill="#f5cfb8"/><rect x="15" y="40.5" width="3.8" height="1.8" fill="#222"/><rect x="19.2" y="40.5" width="3.8" height="1.8" fill="#222"/><rect x="17.5" y="14.5" width="3" height="2.5" fill="#f5cfb8"/><ellipse cx="19" cy="10" rx="5.6" ry="6.2" fill="#f5cfb8"/><path d="M13.2 10 C12 2.5 26 2.5 24.8 8.5 C22 6.5 17 7 14.5 11.5 Z" fill="#6a3a24"/></svg>
<div class="a" style="left:116.5px;top:316.5px;width:15.5px;height:10px;background:#3f8fe0;border-radius:1px"></div><span class="t" style="left:118.3px;top:318.5px;font-size:6px;font-weight:bold;color:#fff">STD</span>
</div>
<div id="ttb" class="a">
<div class="a" style="left:0;top:0;width:487px;height:1px;background:#e2e2e2"></div><div class="a" style="left:537px;top:0;width:487px;height:1px;background:#e2e2e2"></div>
<svg class="a" style="left:9.4px;top:8.5px" width="9" height="9" viewBox="0 0 9 9"><rect x="0.5" y="0.5" width="7" height="7" stroke="#666" stroke-width="0.8" fill="none"/><path d="M1 3 L3 1 M1 5 L5 1 M1 7 L7 1 M3 7 L7 3 M5 7 L7 5" stroke="#888" stroke-width="0.6"/></svg>
<span class="t" style="left:20.3px;top:9.8px;font-size:6.9px;color:#3c3c3c">Background</span>
<svg class="a" style="left:67.3px;top:8.5px" width="9" height="9" viewBox="0 0 9 9"><rect x="0.5" y="0.5" width="5" height="5" stroke="#666" stroke-width="0.8" fill="none"/><rect x="3" y="3" width="4.5" height="4.5" fill="#fff" stroke="#666" stroke-width="0.8"/></svg>
<span class="t" style="left:77.5px;top:9.8px;font-size:6.9px;color:#3c3c3c">Foreground</span>
<svg class="a" style="left:123.2px;top:8.5px" width="9" height="9" viewBox="0 0 9 9"><rect x="0.5" y="0.5" width="7" height="7" stroke="#666" stroke-width="0.8" fill="none"/><path d="M2 3 H4 M2 5 H4 M5 3 H6 M5 5 H6" stroke="#666" stroke-width="0.7"/></svg>
<span class="t" style="left:133.8px;top:9.8px;font-size:6.9px;color:#3c3c3c">Subtitles</span>
<svg class="a" style="left:169.0px;top:8.5px" width="9" height="9" viewBox="0 0 9 9"><rect x="0.5" y="2" width="5" height="5" stroke="#666" stroke-width="0.8" fill="none"/><rect x="3.5" y="0.5" width="5" height="5" fill="#fff" stroke="#666" stroke-width="0.8"/><path d="M5 2 H7 M6 2 V4.5" stroke="#666" stroke-width="0.6"/></svg>
<span class="t" style="left:181.6px;top:9.8px;font-size:6.9px;color:#3c3c3c">TTS</span>
<svg class="a" style="left:201.4px;top:8.5px" width="9" height="9" viewBox="0 0 9 9"><rect x="0.5" y="2" width="5" height="5" stroke="#666" stroke-width="0.8" fill="none"/><rect x="3.5" y="0.5" width="5" height="5" fill="#fff" stroke="#666" stroke-width="0.8"/><path d="M5 2 H7 M6 2 V4.5" stroke="#666" stroke-width="0.6"/></svg>
<span class="t" style="left:214.0px;top:9.8px;font-size:6.9px;color:#3c3c3c">STT</span>
<svg class="a" style="left:233.6px;top:8.5px" width="9" height="9" viewBox="0 0 9 9"><path d="M2 1 V7 M0.5 4 H3.5 M5 2 L7 0.5 M5 4.5 H8 M5 7 L7 8" stroke="#666" stroke-width="0.8" fill="none"/></svg>
<span class="t" style="left:245.0px;top:9.8px;font-size:6.9px;color:#3c3c3c">Effects</span>
<svg class="a" style="left:274.0px;top:8.5px" width="9" height="9" viewBox="0 0 9 9"><path d="M4 0.5 C2 0.5 2 4.5 4 4.5 C6 4.5 6 0.5 4 0.5 Z M1.5 3 C1.5 6.5 6.5 6.5 6.5 3 M4 5.8 V8 M2.5 8 H5.5" stroke="#666" stroke-width="0.8" fill="none"/></svg>
<span class="t" style="left:284.6px;top:9.8px;font-size:6.9px;color:#3c3c3c">Record</span>
<svg class="a" style="left:315.7px;top:8.5px" width="9" height="9" viewBox="0 0 9 9"><rect x="0.5" y="0.5" width="7.5" height="7" stroke="#666" stroke-width="0.8" fill="none"/><circle cx="4.25" cy="4" r="1.8" stroke="#666" stroke-width="0.8" fill="none"/></svg>
<span class="t" style="left:327.5px;top:9.8px;font-size:6.9px;color:#3c3c3c">Mask</span>
<svg class="a" style="left:353.0px;top:8.5px" width="9" height="9" viewBox="0 0 9 9"><circle cx="4.2" cy="2.8" r="2.3" stroke="#666" stroke-width="0.8" fill="none"/><circle cx="2.8" cy="5.3" r="2.3" stroke="#666" stroke-width="0.8" fill="none"/><circle cx="5.6" cy="5.3" r="2.3" stroke="#666" stroke-width="0.8" fill="none"/></svg>
<span class="t" style="left:364.4px;top:9.8px;font-size:6.9px;color:#3c3c3c">Filter</span>
<svg class="a" style="left:391.8px;top:8.5px" width="9" height="9" viewBox="0 0 9 9"><path d="M0.5 1 V7.5 M2 3 H7 M2 5.5 H5" stroke="#bbb" stroke-width="0.8"/></svg>
<span class="t" style="left:401.9px;top:9.8px;font-size:6.9px;color:#bbb">Align</span>
<svg class="a" style="left:482px;top:7.5px" width="11" height="11" viewBox="0 0 9 9"><path d="M1.5 4.5 A3.3 3.3 0 1 0 2.5 2.1" fill="none" stroke="#555" stroke-width="0.9"/><path d="M0.6 1 L2.9 1.8 L1.5 3.6 Z" fill="#555"/><path d="M3.8 3 L6 4.5 L3.8 6 Z" fill="#555"/></svg>
<svg class="a" style="left:509.5px;top:7.5px" width="8" height="10" viewBox="0 0 8 10"><path d="M0.5 0.5 L7.5 5 L0.5 9.5 Z" fill="#555"/></svg>
<svg class="a" style="left:533.5px;top:9.0px" width="9" height="9" viewBox="0 0 9 9"><path d="M5 4 L8 1 M6 1 H8 V3 M4 5 L1 8 M1 6 V8 H3" stroke="#555" stroke-width="0.9" fill="none"/></svg>
<span class="t" style="left:553.2px;top:10.0px;font-size:7.2px;color:#888">00:43.54</span>
<span class="t" style="left:591.0px;top:10.0px;font-size:7.2px;color:#888">/ 00:48.00</span>
<div class="a" style="left:639.0px;top:7.0px;width:63.6px;height:11px;border:1px solid #ddd;border-radius:1px;background:#fff"></div>
<div class="a" style="left:654.5px;top:7.0px;width:1px;height:11px;background:#e3e3e3"></div><div class="a" style="left:687.0px;top:7.0px;width:1px;height:11px;background:#e3e3e3"></div>
<div class="a" style="left:644.5px;top:12.3px;width:5px;height:1px;background:#555"></div>
<svg class="a" style="left:691.5px;top:9.5px" width="6" height="6" viewBox="0 0 6 6"><path d="M3 0 V6 M0 3 H6" stroke="#555" stroke-width="1"/></svg>
<span class="t" style="left:658.0px;top:9.6px;font-size:6.2px;font-weight:bold;color:#444">00:06.00</span>
<div class="a" style="left:710.7px;top:8.0px;width:16.6px;height:9.5px;background:#1a73e0;border-radius:5px"></div><div class="a" style="left:718.5px;top:9.0px;width:7.5px;height:7.5px;background:#fff;border-radius:50%"></div>
<svg class="a" style="left:813.1px;top:7.6px" width="9" height="9" viewBox="0 0 9 9"><path d="M0.5 2.5 H2.5 L3.3 1 H5.7 L6.5 2.5 H8.5 V8 H0.5 Z" stroke="#777" stroke-width="0.8" fill="none"/><circle cx="4.5" cy="5" r="1.6" stroke="#777" stroke-width="0.8" fill="none"/></svg>
<svg class="a" style="left:829.1px;top:7.6px" width="9" height="9" viewBox="0 0 9 9"><path d="M6 1 L8 3 L4 7 H2 V5 Z M0.5 2 V8.5 H7" stroke="#777" stroke-width="0.8" fill="none"/></svg>
<svg class="a" style="left:845.5px;top:7.6px" width="9" height="9" viewBox="0 0 9 9"><path d="M4 0.5 V8.5 M1.5 2 H6.5 V5 H1.5 Z M6.5 3.5 L8.5 4.5" stroke="#999" stroke-width="0.8" fill="none"/></svg>
<svg class="a" style="left:862.5px;top:7.6px" width="9" height="9" viewBox="0 0 9 9"><path d="M0.5 1 H7.5 L5 4.5 V8 L3 7 V4.5 Z M7 6 V8.5" stroke="#777" stroke-width="0.8" fill="none"/></svg>
<svg class="a" style="left:879.1px;top:7.6px" width="9" height="9" viewBox="0 0 9 9"><path d="M0.5 2.5 H8.5 M0.5 6.5 H8.5" stroke="#777" stroke-width="0.8" fill="none"/><circle cx="2.5" cy="2.5" r="1.2" fill="#fff" stroke="#777" stroke-width="0.8"/><circle cx="6.5" cy="6.5" r="1.2" fill="#fff" stroke="#777" stroke-width="0.8"/></svg>
<svg class="a" style="left:901.3px;top:7.6px" width="9" height="9" viewBox="0 0 9 9"><rect x="0.5" y="1" width="8" height="7" stroke="#777" stroke-width="0.8" fill="none"/><path d="M2.5 4.5 H3.5 M5.5 4.5 H6.5" stroke="#777" stroke-width="1"/></svg>
<svg class="a" style="left:918.0px;top:7.6px" width="9" height="9" viewBox="0 0 9 9"><rect x="0.5" y="1" width="8" height="7" stroke="#777" stroke-width="0.8" fill="none"/><path d="M3 3.5 V5.5 M6 3.5 V5.5" stroke="#777" stroke-width="0.8"/></svg>
<svg class="a" style="left:934.5px;top:7.6px" width="9" height="9" viewBox="0 0 9 9"><circle cx="4.5" cy="4.5" r="3.8" stroke="#777" stroke-width="0.8" fill="none"/><path d="M2.5 4.5 H6.5" stroke="#777" stroke-width="0.8"/></svg>
<svg class="a" style="left:1005.5px;top:7.6px" width="9" height="9" viewBox="0 0 9 9"><circle cx="4.5" cy="4.5" r="3.8" stroke="#777" stroke-width="0.8" fill="none"/><path d="M2.5 4.5 H6.5 M4.5 2.5 V6.5" stroke="#777" stroke-width="0.8"/></svg>
<div class="a" style="left:950.0px;top:11.6px;width:49px;height:1px;background:#e2e2e2"></div>
<div class="a" style="left:946.8px;top:8.8px;width:6px;height:6px;border:1px solid #3f8fe0;border-radius:50%;background:#fff"></div>
</div>
<div id="tl" class="a">
<div class="a" style="left:0;top:0;width:1024px;height:1px;background:#e6e6e6"></div>
<div class="a" style="left:0.0px;top:16.0px;width:1024px;height:15.5px;background:#eceef1"></div>
<div class="a" style="left:0.0px;top:16.0px;width:1024px;height:1px;background:#e6e8eb"></div>
<div class="a" style="left:0.0px;top:31.5px;width:1024px;height:1px;background:#e6e8eb"></div>
<div class="a" style="left:0.0px;top:58.4px;width:1024px;height:1px;background:#e6e8eb"></div>
<div class="a" style="left:0.0px;top:73.5px;width:1024px;height:1px;background:#e6e8eb"></div>
<div class="a" style="left:0.0px;top:89.3px;width:1024px;height:1px;background:#e6e8eb"></div>
<div class="a" style="left:0.0px;top:105.0px;width:1024px;height:1px;background:#e6e8eb"></div>
<div class="a" style="left:0.0px;top:143.0px;width:1024px;height:1px;background:#e6e6e6"></div>
<div class="a" style="left:107.0px;top:0.0px;width:1px;height:153px;background:#e3e3e3"></div>
<svg class="a" style="left:4.6px;top:3.5px" width="9" height="9" viewBox="0 0 9 9"><rect x="0.5" y="1" width="8" height="7" stroke="#888" stroke-width="0.8" fill="none"/><path d="M3 4.5 H6 M4.5 3 V6" stroke="#888" stroke-width="0.8" fill="none"/></svg>
<svg class="a" style="left:17.6px;top:3.5px" width="9" height="9" viewBox="0 0 9 9"><path d="M0.5 1 H3.5 L4.5 2 H8.5 V8 H0.5 Z M4 5 H6.5 M5.25 3.7 V6.3" stroke="#888" stroke-width="0.8" fill="none"/></svg>
<svg class="a" style="left:31.7px;top:3.5px" width="9" height="9" viewBox="0 0 9 9"><path d="M2 1 H7 M4.5 2 V8 M3 6.5 L4.5 8 L6 6.5" stroke="#bbb" stroke-width="0.8" fill="none"/></svg>
<svg class="a" style="left:45.3px;top:3.5px" width="9" height="9" viewBox="0 0 9 9"><path d="M2 8 H7 M4.5 7 V1 M3 2.5 L4.5 1 L6 2.5" stroke="#bbb" stroke-width="0.8" fill="none"/></svg>
<svg class="a" style="left:63.1px;top:3.5px" width="9" height="9" viewBox="0 0 9 9"><path d="M1.5 1.5 H7.5 M2.3 1.5 L2.8 8 H6.2 L6.7 1.5" stroke="#bbb" stroke-width="0.8" fill="none"/></svg>
<svg class="a" style="left:77.8px;top:3.5px" width="9" height="9" viewBox="0 0 9 9"><rect x="1.5" y="4.2" width="6" height="4.3" fill="#555"/><path d="M2.8 4.2 V2.7 A1.7 1.7 0 0 1 6.2 2.7 V4.2" stroke="#555" stroke-width="1" fill="none"/></svg>
<svg class="a" style="left:93.0px;top:3.5px" width="9" height="9" viewBox="0 0 9 9"><path d="M0.5 4.5 C2.5 1 6.5 1 8.5 4.5 C6.5 8 2.5 8 0.5 4.5 Z" fill="#666"/><circle cx="4.5" cy="4.5" r="1.4" fill="#fff"/></svg>
<div class="a" style="left:107.6px;top:12.0px;width:0.8px;height:4px;background:#cfcfcf"></div>
<div class="a" style="left:122.8px;top:13.0px;width:0.8px;height:3px;background:#cfcfcf"></div>
<div class="a" style="left:138.0px;top:13.0px;width:0.8px;height:3px;background:#cfcfcf"></div>
<div class="a" style="left:153.2px;top:13.0px;width:0.8px;height:3px;background:#cfcfcf"></div>
<div class="a" style="left:168.4px;top:13.0px;width:0.8px;height:3px;background:#cfcfcf"></div>
<div class="a" style="left:183.6px;top:13.0px;width:0.8px;height:3px;background:#cfcfcf"></div>
<div class="a" style="left:198.8px;top:13.0px;width:0.8px;height:3px;background:#cfcfcf"></div>
<div class="a" style="left:214.0px;top:13.0px;width:0.8px;height:3px;background:#cfcfcf"></div>
<div class="a" style="left:229.2px;top:13.0px;width:0.8px;height:3px;background:#cfcfcf"></div>
<div class="a" style="left:244.4px;top:13.0px;width:0.8px;height:3px;background:#cfcfcf"></div>
<div class="a" style="left:259.6px;top:12.0px;width:0.8px;height:4px;background:#cfcfcf"></div>
<div class="a" style="left:274.8px;top:13.0px;width:0.8px;height:3px;background:#cfcfcf"></div>
<div class="a" style="left:290.0px;top:13.0px;width:0.8px;height:3px;background:#cfcfcf"></div>
<div class="a" style="left:305.2px;top:13.0px;width:0.8px;height:3px;background:#cfcfcf"></div>
<div class="a" style="left:320.4px;top:13.0px;width:0.8px;height:3px;background:#cfcfcf"></div>
<div class="a" style="left:335.6px;top:13.0px;width:0.8px;height:3px;background:#cfcfcf"></div>
<div class="a" style="left:350.8px;top:13.0px;width:0.8px;height:3px;background:#cfcfcf"></div>
<div class="a" style="left:366.0px;top:13.0px;width:0.8px;height:3px;background:#cfcfcf"></div>
<div class="a" style="left:381.2px;top:13.0px;width:0.8px;height:3px;background:#cfcfcf"></div>
<div class="a" style="left:396.4px;top:13.0px;width:0.8px;height:3px;background:#cfcfcf"></div>
<div class="a" style="left:411.6px;top:12.0px;width:0.8px;height:4px;background:#cfcfcf"></div>
<div class="a" style="left:426.8px;top:13.0px;width:0.8px;height:3px;background:#cfcfcf"></div>
<div class="a" style="left:442.0px;top:13.0px;width:0.8px;height:3px;background:#cfcfcf"></div>
<div class="a" style="left:457.2px;top:13.0px;width:0.8px;height:3px;background:#cfcfcf"></div>
<div class="a" style="left:472.4px;top:13.0px;width:0.8px;height:3px;background:#cfcfcf"></div>
<div class="a" style="left:487.6px;top:13.0px;width:0.8px;height:3px;background:#cfcfcf"></div>
<div class="a" style="left:502.8px;top:13.0px;width:0.8px;height:3px;background:#cfcfcf"></div>
<div class="a" style="left:518.0px;top:13.0px;width:0.8px;height:3px;background:#cfcfcf"></div>
<div class="a" style="left:533.2px;top:13.0px;width:0.8px;height:3px;background:#cfcfcf"></div>
<div class="a" style="left:548.4px;top:13.0px;width:0.8px;height:3px;background:#cfcfcf"></div>
<div class="a" style="left:563.6px;top:12.0px;width:0.8px;height:4px;background:#cfcfcf"></div>
<div class="a" style="left:578.8px;top:13.0px;width:0.8px;height:3px;background:#cfcfcf"></div>
<div class="a" style="left:594.0px;top:13.0px;width:0.8px;height:3px;background:#cfcfcf"></div>
<div class="a" style="left:609.2px;top:13.0px;width:0.8px;height:3px;background:#cfcfcf"></div>
<div class="a" style="left:624.4px;top:13.0px;width:0.8px;height:3px;background:#cfcfcf"></div>
<div class="a" style="left:639.6px;top:13.0px;width:0.8px;height:3px;background:#cfcfcf"></div>
<div class="a" style="left:654.8px;top:13.0px;width:0.8px;height:3px;background:#cfcfcf"></div>
<div class="a" style="left:670.0px;top:13.0px;width:0.8px;height:3px;background:#cfcfcf"></div>
<div class="a" style="left:685.2px;top:13.0px;width:0.8px;height:3px;background:#cfcfcf"></div>
<div class="a" style="left:700.4px;top:13.0px;width:0.8px;height:3px;background:#cfcfcf"></div>
<div class="a" style="left:715.6px;top:12.0px;width:0.8px;height:4px;background:#cfcfcf"></div>
<div class="a" style="left:730.8px;top:13.0px;width:0.8px;height:3px;background:#cfcfcf"></div>
<div class="a" style="left:746.0px;top:13.0px;width:0.8px;height:3px;background:#cfcfcf"></div>
<div class="a" style="left:761.2px;top:13.0px;width:0.8px;height:3px;background:#cfcfcf"></div>
<div class="a" style="left:776.4px;top:13.0px;width:0.8px;height:3px;background:#cfcfcf"></div>
<div class="a" style="left:791.6px;top:13.0px;width:0.8px;height:3px;background:#cfcfcf"></div>
<div class="a" style="left:806.8px;top:13.0px;width:0.8px;height:3px;background:#cfcfcf"></div>
<div class="a" style="left:822.0px;top:13.0px;width:0.8px;height:3px;background:#cfcfcf"></div>
<div class="a" style="left:837.2px;top:13.0px;width:0.8px;height:3px;background:#cfcfcf"></div>
<div class="a" style="left:852.4px;top:13.0px;width:0.8px;height:3px;background:#cfcfcf"></div>
<div class="a" style="left:867.6px;top:12.0px;width:0.8px;height:4px;background:#cfcfcf"></div>
<div class="a" style="left:882.8px;top:13.0px;width:0.8px;height:3px;background:#cfcfcf"></div>
<div class="a" style="left:898.0px;top:13.0px;width:0.8px;height:3px;background:#cfcfcf"></div>
<div class="a" style="left:913.2px;top:13.0px;width:0.8px;height:3px;background:#cfcfcf"></div>
<div class="a" style="left:928.4px;top:13.0px;width:0.8px;height:3px;background:#cfcfcf"></div>
<div class="a" style="left:943.6px;top:13.0px;width:0.8px;height:3px;background:#cfcfcf"></div>
<div class="a" style="left:958.8px;top:13.0px;width:0.8px;height:3px;background:#cfcfcf"></div>
<div class="a" style="left:974.0px;top:13.0px;width:0.8px;height:3px;background:#cfcfcf"></div>
<div class="a" style="left:989.2px;top:13.0px;width:0.8px;height:3px;background:#cfcfcf"></div>
<div class="a" style="left:1004.4px;top:13.0px;width:0.8px;height:3px;background:#cfcfcf"></div>
<div class="a" style="left:1019.6px;top:12.0px;width:0.8px;height:4px;background:#cfcfcf"></div>
<span class="t" style="left:109.7px;top:3.0px;font-size:6.5px;color:#333">0s</span>
<span class="t" style="left:256.3px;top:3.0px;font-size:6.5px;color:#333">1s</span>
<span class="t" style="left:408.2px;top:3.0px;font-size:6.5px;color:#333">2s</span>
<span class="t" style="left:560.1px;top:3.0px;font-size:6.5px;color:#333">3s</span>
<span class="t" style="left:712.0px;top:3.0px;font-size:6.5px;color:#333">4s</span>
<span class="t" style="left:863.9px;top:3.0px;font-size:6.5px;color:#333">5s</span>
<span class="t" style="left:1008.5px;top:3.0px;font-size:6.5px;color:#333">6s</span>
<svg class="a" style="left:3.5px;top:20.2px" width="10" height="9" viewBox="0 0 10 9"><rect x="0.5" y="1.5" width="6.5" height="6" stroke="#888" stroke-width="0.8" fill="none"/><path d="M7 3.5 L9.5 2 V7 L7 5.5" stroke="#888" stroke-width="0.8" fill="none"/></svg>
<span class="t" style="left:19.7px;top:21.5px;font-size:6.8px;color:#222">Camera</span>
<div class="a" style="left:79px;top:24px;width:2px;height:2px;background:#555;border-radius:50%"></div>
<div class="a" style="left:94px;top:24px;width:2px;height:2px;background:#555;border-radius:50%"></div>
<svg class="a" style="left:3.5px;top:41.5px" width="10" height="9" viewBox="0 0 10 9"><circle cx="4.5" cy="2.2" r="1.7" stroke="#888" stroke-width="0.8" fill="none"/><path d="M2 8.5 V4.8 H7 V8.5 M3.5 8.5 V6.5 M5.5 8.5 V6.5" stroke="#888" stroke-width="0.8" fill="none"/></svg>
<span class="t" style="left:19.7px;top:42.8px;font-size:6.8px;color:#222">Businessman</span>
<div class="a" style="left:79px;top:45px;width:2px;height:2px;background:#555;border-radius:50%"></div>
<div class="a" style="left:94px;top:45px;width:2px;height:2px;background:#555;border-radius:50%"></div>
<svg class="a" style="left:3.5px;top:62.5px" width="10" height="9" viewBox="0 0 10 9"><path d="M1 1.5 H8 V4 H6.5 V8 H2.5 V4 H1 Z" stroke="#888" stroke-width="0.8" fill="none"/></svg>
<span class="t" style="left:19.7px;top:63.8px;font-size:6.8px;color:#222">che</span>
<div class="a" style="left:79px;top:66px;width:2px;height:2px;background:#555;border-radius:50%"></div>
<div class="a" style="left:94px;top:66px;width:2px;height:2px;background:#555;border-radius:50%"></div>
<svg class="a" style="left:3.5px;top:78.0px" width="10" height="9" viewBox="0 0 10 9"><path d="M1 1.5 H8 V4 H6.5 V8 H2.5 V4 H1 Z M3 1.5 V3 M6 1.5 V3" stroke="#888" stroke-width="0.8" fill="none"/></svg>
<span class="t" style="left:19.7px;top:79.3px;font-size:6.8px;color:#222">jiantou</span>
<div class="a" style="left:79px;top:82px;width:2px;height:2px;background:#555;border-radius:50%"></div>
<div class="a" style="left:94px;top:82px;width:2px;height:2px;background:#555;border-radius:50%"></div>
<svg class="a" style="left:3.5px;top:93.5px" width="10" height="9" viewBox="0 0 10 9"><rect x="0.5" y="1" width="8" height="7" stroke="#888" stroke-width="0.8" fill="none"/><path d="M1.5 7 L3.5 4.5 L5 6 L6 5 L7.5 7" stroke="#888" stroke-width="0.8" fill="none"/></svg>
<span class="t" style="left:19.7px;top:94.8px;font-size:6.8px;color:#222">yinying</span>
<div class="a" style="left:79px;top:97px;width:2px;height:2px;background:#555;border-radius:50%"></div>
<div class="a" style="left:94px;top:97px;width:2px;height:2px;background:#555;border-radius:50%"></div>
<svg class="a" style="left:62px;top:19.5px" width="8.5" height="8.5" viewBox="0 0 9 9"><circle cx="4.5" cy="4.5" r="4.4" fill="#1f74d6"/><path d="M3 3.4 C3 1.6 6 1.6 6 3.4 C6 4.6 4.5 4.6 4.5 5.8" stroke="#fff" stroke-width="1" fill="none"/><circle cx="4.5" cy="7.2" r="0.6" fill="#fff"/></svg>
<div class="a" style="left:108.0px;top:17.9px;width:303.5px;height:11.9px;background:#5b9de2;border-radius:1.5px"></div>
<span class="t" style="left:108.0px;top:21.6px;width:303.5px;text-align:center;font-size:6.5px;color:#fff">Default Camera</span>
<div class="a" style="left:108.0px;top:32.4px;width:243.2px;height:11.9px;background:#67aee4;border-radius:1.5px;overflow:hidden"><svg class="a" style="left:0;top:0" width="243.2" height="11.9"><path d="M0 0 H170.2 L0 11.8 Z" fill="#5a93cf"/></svg></div>
<span class="t" style="left:108.0px;top:36.1px;width:243.2px;text-align:center;font-size:6.5px;color:#fff">Bounce In Left</span>
<div class="a" style="left:351.2px;top:32.4px;width:195.8px;height:11.9px;background:#5b9de2;border-radius:1.5px"></div>
<span class="t" style="left:351.2px;top:36.1px;width:195.8px;text-align:center;font-size:6.5px;color:#fff">Bounce</span>
<div class="a" style="left:923.0px;top:32.4px;width:75.5px;height:11.9px;background:linear-gradient(to right,#64a9e2,#5f95d2);border-radius:1px"></div>
<span class="t" style="left:923.0px;top:36.1px;width:75.5px;text-align:center;font-size:6.5px;color:#fff">Always Display</span>
<div class="a" style="left:108.0px;top:45.9px;width:797.5px;height:10.7px;background:#8c97e2;border-radius:1.5px"></div>
<span class="t" style="left:478.5px;top:48.0px;font-size:5.5px;color:#fff">&#8644; Look Up</span>
<div class="a" style="left:891.5px;top:48.0px;width:12px;height:7px;background:#3a4a6e;border-radius:3.5px"></div><svg class="a" style="left:893.5px;top:50.5px" width="8" height="2" viewBox="0 0 8 2"><circle cx="1" cy="1" r="0.8" fill="#fff"/><circle cx="4" cy="1" r="0.8" fill="#fff"/><circle cx="7" cy="1" r="0.8" fill="#fff"/></svg>
<div class="a" style="left:108.0px;top:60.2px;width:243.2px;height:11.9px;background:#67aee4;border-radius:1.5px;overflow:hidden"><svg class="a" style="left:0;top:0" width="243.2" height="11.9"><path d="M0 0 H170.2 L0 11.8 Z" fill="#5a93cf"/></svg></div>
<span class="t" style="left:108.0px;top:63.8px;width:243.2px;text-align:center;font-size:6.5px;color:#fff">Bounce In Left</span>
<div class="a" style="left:351.2px;top:60.2px;width:196.3px;height:11.9px;background:#5b9de2;border-radius:1.5px"></div>
<span class="t" style="left:351.2px;top:63.8px;width:196.3px;text-align:center;font-size:6.5px;color:#fff">Bounce</span>
<div class="a" style="left:918.0px;top:60.2px;width:75.5px;height:11.9px;background:linear-gradient(to right,#64a9e2,#5f95d2);border-radius:1px"></div>
<span class="t" style="left:918.0px;top:63.8px;width:75.5px;text-align:center;font-size:6.5px;color:#fff">Always Display</span>
<div class="a" style="left:108.0px;top:75.5px;width:241.5px;height:11.9px;background:#67aee4;border-radius:1.5px;overflow:hidden"><svg class="a" style="left:0;top:0" width="241.5" height="11.9"><path d="M0 0 H169.1 L0 11.8 Z" fill="#5a93cf"/></svg></div>
<span class="t" style="left:108.0px;top:79.1px;width:241.5px;text-align:center;font-size:6.5px;color:#fff">Extend From Left</span>
<div class="a" style="left:349.5px;top:75.5px;width:196.0px;height:11.9px;background:#5b9de2;border-radius:1.5px"></div>
<span class="t" style="left:349.5px;top:79.1px;width:196.0px;text-align:center;font-size:6.5px;color:#fff">Tossing</span>
<div class="a" style="left:914.0px;top:75.5px;width:75.5px;height:11.9px;background:linear-gradient(to right,#64a9e2,#5f95d2);border-radius:1px"></div>
<span class="t" style="left:914.0px;top:79.1px;width:75.5px;text-align:center;font-size:6.5px;color:#fff">Always Display</span>
<div class="a" style="left:108.0px;top:90.8px;width:243.2px;height:11.9px;background:#67aee4;border-radius:1.5px;overflow:hidden"><svg class="a" style="left:0;top:0" width="243.2" height="11.9"><path d="M0 0 H170.2 L0 11.8 Z" fill="#5a93cf"/></svg></div>
<span class="t" style="left:108.0px;top:94.4px;width:243.2px;text-align:center;font-size:6.5px;color:#fff">Fuzzy To Clear</span>
<div class="a" style="left:909.0px;top:90.8px;width:75.5px;height:11.9px;background:linear-gradient(to right,#64a9e2,#5f95d2);border-radius:1px"></div>
<span class="t" style="left:909.0px;top:94.4px;width:75.5px;text-align:center;font-size:6.5px;color:#fff">Always Display</span>
<svg class="a" style="left:425.5px;top:19.0px" width="10" height="10" viewBox="0 0 10 10"><path d="M5 0.3 L9.7 5 L5 9.7 L0.3 5 Z" fill="#5aaa6a"/><path d="M5 2.6 V7.4 M2.6 5 H7.4" stroke="#dff3e3" stroke-width="1"/></svg>
<svg class="a" style="left:560.5px;top:33.0px" width="10" height="10" viewBox="0 0 10 10"><path d="M5 0.3 L9.7 5 L5 9.7 L0.3 5 Z" fill="#5aaa6a"/><path d="M5 2.6 V7.4 M2.6 5 H7.4" stroke="#dff3e3" stroke-width="1"/></svg>
<svg class="a" style="left:910.5px;top:46.0px" width="10" height="10" viewBox="0 0 10 10"><path d="M5 0.3 L9.7 5 L5 9.7 L0.3 5 Z" fill="#5aaa6a"/><path d="M5 2.6 V7.4 M2.6 5 H7.4" stroke="#dff3e3" stroke-width="1"/></svg>
<svg class="a" style="left:561.5px;top:61.0px" width="10" height="10" viewBox="0 0 10 10"><path d="M5 0.3 L9.7 5 L5 9.7 L0.3 5 Z" fill="#5aaa6a"/><path d="M5 2.6 V7.4 M2.6 5 H7.4" stroke="#dff3e3" stroke-width="1"/></svg>
<svg class="a" style="left:559.0px;top:76.0px" width="10" height="10" viewBox="0 0 10 10"><path d="M5 0.3 L9.7 5 L5 9.7 L0.3 5 Z" fill="#5aaa6a"/><path d="M5 2.6 V7.4 M2.6 5 H7.4" stroke="#dff3e3" stroke-width="1"/></svg>
<svg class="a" style="left:365.0px;top:92.0px" width="10" height="10" viewBox="0 0 10 10"><path d="M5 0.3 L9.7 5 L5 9.7 L0.3 5 Z" fill="#5aaa6a"/><path d="M5 2.6 V7.4 M2.6 5 H7.4" stroke="#dff3e3" stroke-width="1"/></svg>
<div class="a" style="left:340.0px;top:4.0px;width:1px;height:149px;background:#d3434b"></div>
<svg class="a" style="left:336.2px;top:4.3px" width="9" height="12" viewBox="0 0 9 12"><path d="M0.5 1.5 Q0.5 0.3 1.7 0.3 H7.3 Q8.5 0.3 8.5 1.5 V8 L4.5 11.7 L0.5 8 Z" fill="#4b8fdc" stroke="#3a7cc8" stroke-width="0.5"/><path d="M3.5 3 V7 M5.5 3 V7" stroke="#fff" stroke-width="0.6"/></svg>
<span class="t" style="left:0.0px;top:146.5px;font-size:6.5px;color:#444">Current Scene: 03</span>
<svg class="a" style="left:93.0px;top:145.0px" width="8" height="8" viewBox="0 0 8 8"><rect x="0.5" y="0.5" width="5" height="6" fill="none" stroke="#666" stroke-width="0.8"/><rect x="3" y="2.5" width="4.5" height="5" fill="#fff" stroke="#666" stroke-width="0.8"/></svg>
</div>
</body></html>
